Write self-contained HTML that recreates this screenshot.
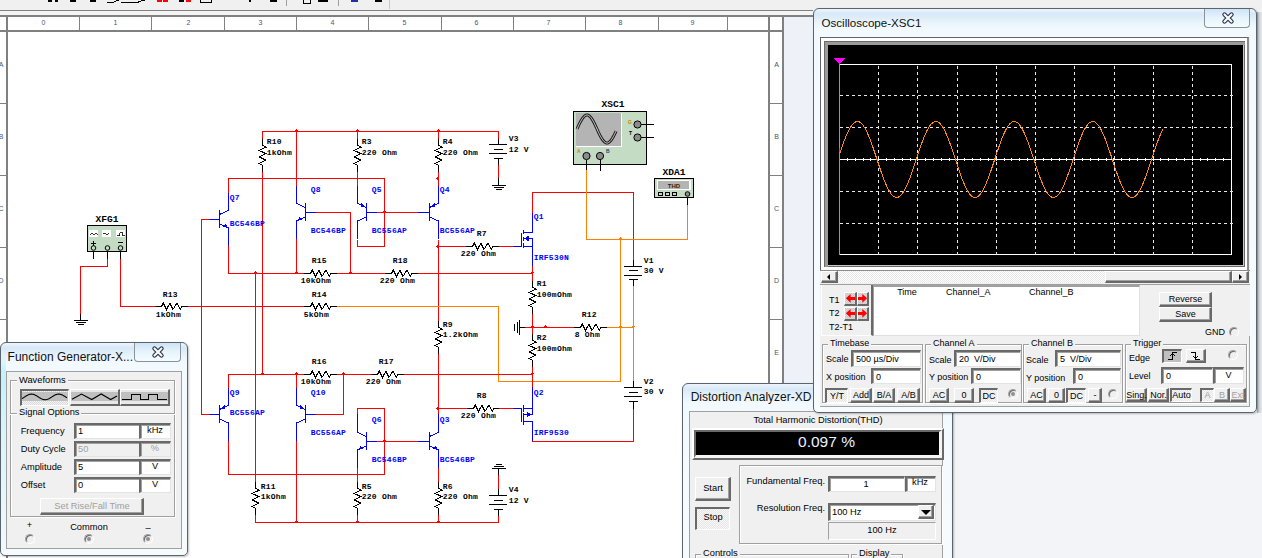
<!DOCTYPE html>
<html><head><meta charset="utf-8"><style>
*{margin:0;padding:0;box-sizing:border-box}
html,body{width:1262px;height:558px;overflow:hidden;background:#f2f4f8;font-family:"Liberation Sans",sans-serif}
.abs{position:absolute}
.t{white-space:nowrap;font-family:"Liberation Sans",sans-serif}
svg text.sl{font-family:"Liberation Mono",monospace;font-size:8px;font-weight:bold;letter-spacing:0.25px}
svg text.big{font-family:"Liberation Mono",monospace;font-size:9.6px;font-weight:bold}
svg text.tiny2{font-family:"Liberation Sans",sans-serif;font-size:6px;font-weight:bold;text-anchor:middle}
svg text.rl{font-family:"Liberation Sans",sans-serif;font-size:7px;text-anchor:middle}
svg text.tiny{font-family:"Liberation Sans",sans-serif;font-size:5px;font-weight:bold}
</style></head><body>
<div class="abs" style="left:0;top:0;width:1262px;height:10px;background:#f0f0f0"></div><div class="abs" style="left:0;top:10px;width:813px;height:7px;background:#f4f4f4;border-top:1px solid #808080;border-bottom:2px solid #808080"></div><div class="abs" style="left:0;top:17px;width:783px;height:541px;background:#fff"></div><div class="abs" style="left:784px;top:17px;width:30px;height:541px;background:#eef2f8"></div><svg class="abs" style="left:0;top:0" width="1262" height="558" shape-rendering="crispEdges"><rect x="6" y="16" width="2" height="542" fill="#808080"/><rect x="0" y="30" width="783" height="2" fill="#808080"/><rect x="79" y="16" width="1" height="14" fill="#808080"/><rect x="151" y="16" width="1" height="14" fill="#808080"/><rect x="224" y="16" width="1" height="14" fill="#808080"/><rect x="296" y="16" width="1" height="14" fill="#808080"/><rect x="368" y="16" width="1" height="14" fill="#808080"/><rect x="441" y="16" width="1" height="14" fill="#808080"/><rect x="513" y="16" width="1" height="14" fill="#808080"/><rect x="585" y="16" width="1" height="14" fill="#808080"/><rect x="658" y="16" width="1" height="14" fill="#808080"/><rect x="727" y="16" width="1" height="14" fill="#808080"/><rect x="768" y="16" width="2" height="542" fill="#808080"/><rect x="782" y="16" width="2" height="542" fill="#808080"/><rect x="0" y="103" width="6" height="1" fill="#808080"/><rect x="770" y="103" width="12" height="1" fill="#808080"/><rect x="0" y="175" width="6" height="1" fill="#808080"/><rect x="770" y="175" width="12" height="1" fill="#808080"/><rect x="0" y="247" width="6" height="1" fill="#808080"/><rect x="770" y="247" width="12" height="1" fill="#808080"/><rect x="0" y="319" width="6" height="1" fill="#808080"/><rect x="770" y="319" width="12" height="1" fill="#808080"/><rect x="0" y="391" width="6" height="1" fill="#808080"/><rect x="770" y="391" width="12" height="1" fill="#808080"/><rect x="0" y="463" width="6" height="1" fill="#808080"/><rect x="770" y="463" width="12" height="1" fill="#808080"/><rect x="0" y="535" width="6" height="1" fill="#808080"/><rect x="770" y="535" width="12" height="1" fill="#808080"/><text x="43.5" y="25" class="rl" fill="#4a5470">0</text><text x="115.5" y="25" class="rl" fill="#4a5470">1</text><text x="188.5" y="25" class="rl" fill="#4a5470">2</text><text x="260.5" y="25" class="rl" fill="#4a5470">3</text><text x="332.5" y="25" class="rl" fill="#4a5470">4</text><text x="404.5" y="25" class="rl" fill="#4a5470">5</text><text x="476.5" y="25" class="rl" fill="#4a5470">6</text><text x="548.5" y="25" class="rl" fill="#4a5470">7</text><text x="620.5" y="25" class="rl" fill="#4a5470">8</text><text x="692.5" y="25" class="rl" fill="#4a5470">9</text><text x="776.5" y="67" class="rl" fill="#4a5470">A</text><text x="1" y="67" class="rl" fill="#4a5470">A</text><text x="776.5" y="139" class="rl" fill="#4a5470">B</text><text x="1" y="139" class="rl" fill="#4a5470">B</text><text x="776.5" y="211" class="rl" fill="#4a5470">C</text><text x="1" y="211" class="rl" fill="#4a5470">C</text><text x="776.5" y="283" class="rl" fill="#4a5470">D</text><text x="1" y="283" class="rl" fill="#4a5470">D</text><text x="776.5" y="355" class="rl" fill="#4a5470">E</text><text x="1" y="355" class="rl" fill="#4a5470">E</text><text x="776.5" y="427" class="rl" fill="#4a5470">F</text><text x="1" y="427" class="rl" fill="#4a5470">F</text><text x="776.5" y="499" class="rl" fill="#4a5470">G</text><text x="1" y="499" class="rl" fill="#4a5470">G</text><rect x="262" y="131" width="237" height="1" fill="#ff0000"/><rect x="295" y="130" width="3" height="1" fill="#ff0000"/><rect x="296" y="129" width="1" height="1" fill="#ff0000"/><rect x="356" y="130" width="3" height="1" fill="#ff0000"/><rect x="357" y="129" width="1" height="1" fill="#ff0000"/><rect x="437" y="130" width="3" height="1" fill="#ff0000"/><rect x="438" y="129" width="1" height="1" fill="#ff0000"/><rect x="262" y="131" width="1" height="8" fill="#ff0000"/><rect x="262" y="139" width="1" height="7" fill="#000000"/><rect x="262" y="165" width="1" height="7" fill="#000000"/><polyline points="262.5,145 265.9,147.3 259.1,150.5 265.9,153.6 259.1,156.8 265.9,160.2 259.1,163.5 262.5,165.5" fill="none" stroke="#000000" stroke-width="1"/><rect x="262" y="172" width="1" height="203" fill="#ff0000"/><rect x="357" y="131" width="1" height="8" fill="#ff0000"/><rect x="357" y="139" width="1" height="7" fill="#000000"/><rect x="357" y="165" width="1" height="7" fill="#000000"/><polyline points="357.5,145 360.9,147.3 354.1,150.5 360.9,153.6 354.1,156.8 360.9,160.2 354.1,163.5 357.5,165.5" fill="none" stroke="#000000" stroke-width="1"/><rect x="357" y="172" width="1" height="14" fill="#ff0000"/><rect x="438" y="131" width="1" height="8" fill="#ff0000"/><rect x="438" y="139" width="1" height="7" fill="#000000"/><rect x="438" y="165" width="1" height="7" fill="#000000"/><polyline points="438.5,145 441.9,147.3 435.1,150.5 441.9,153.6 435.1,156.8 441.9,160.2 435.1,163.5 438.5,165.5" fill="none" stroke="#000000" stroke-width="1"/><rect x="438" y="172" width="1" height="14" fill="#ff0000"/><rect x="437" y="177" width="1" height="3" fill="#ff0000"/><rect x="436" y="178" width="1" height="1" fill="#ff0000"/><rect x="498" y="131" width="1" height="8" fill="#ff0000"/><rect x="498" y="139" width="1" height="6" fill="#000000"/><rect x="489" y="144" width="18" height="1" fill="#000000"/><rect x="494" y="149" width="9" height="1" fill="#000000"/><rect x="489" y="153" width="18" height="1" fill="#000000"/><rect x="494" y="158" width="9" height="1" fill="#000000"/><rect x="498" y="158" width="1" height="7" fill="#000000"/><rect x="498" y="165" width="1" height="13" fill="#ff0000"/><rect x="498" y="178" width="1" height="8" fill="#000000"/><rect x="492" y="185" width="14" height="1" fill="#000000"/><rect x="494" y="187" width="10" height="1" fill="#000000"/><rect x="496" y="189" width="6" height="1" fill="#000000"/><rect x="228" y="178" width="157" height="1" fill="#ff0000"/><rect x="228" y="178" width="1" height="15" fill="#ff0000"/><rect x="228" y="193" width="1" height="18" fill="#0000ff"/><rect x="219" y="210" width="1" height="18" fill="#0000ff"/><polyline points="219.5,214.5 228.5,210.5" fill="none" stroke="#0000ff" stroke-width="1"/><polyline points="219.5,224 228.5,228" fill="none" stroke="#0000ff" stroke-width="1"/><polygon points="227.5,227.5 223.0,227.0 225.5,223.5" fill="#0000ff"/><rect x="228" y="228" width="1" height="18" fill="#0000ff"/><rect x="228" y="246" width="1" height="28" fill="#ff0000"/><rect x="201" y="219" width="8" height="1" fill="#ff0000"/><rect x="209" y="219" width="11" height="1" fill="#0000ff"/><rect x="201" y="219" width="1" height="196" fill="#ff0000"/><rect x="296" y="131" width="1" height="55" fill="#ff0000"/><rect x="296" y="186" width="1" height="18" fill="#0000ff"/><rect x="305" y="203" width="1" height="18" fill="#0000ff"/><polyline points="305.5,207.5 296.5,203.5" fill="none" stroke="#0000ff" stroke-width="1"/><polyline points="305.5,217 296.5,221" fill="none" stroke="#0000ff" stroke-width="1"/><polygon points="297.5,220.5 302.0,220.0 299.5,216.5" fill="#0000ff"/><rect x="296" y="221" width="1" height="18" fill="#0000ff"/><rect x="296" y="239" width="1" height="35" fill="#ff0000"/><rect x="306" y="212" width="10" height="1" fill="#0000ff"/><rect x="316" y="212" width="35" height="1" fill="#ff0000"/><rect x="350" y="212" width="1" height="62" fill="#ff0000"/><rect x="357" y="186" width="1" height="18" fill="#0000ff"/><rect x="366" y="203" width="1" height="18" fill="#0000ff"/><polyline points="366.5,207.5 357.5,203.5" fill="none" stroke="#0000ff" stroke-width="1"/><polyline points="366.5,217 357.5,221" fill="none" stroke="#0000ff" stroke-width="1"/><polygon points="365.0,206.5 361.0,203.0 360.5,207.0" fill="#0000ff"/><rect x="357" y="221" width="1" height="18" fill="#0000ff"/><rect x="357" y="240" width="1" height="7" fill="#ff0000"/><rect x="366" y="212" width="11" height="1" fill="#0000ff"/><rect x="377" y="212" width="41" height="1" fill="#ff0000"/><rect x="418" y="212" width="12" height="1" fill="#0000ff"/><rect x="383" y="211" width="3" height="1" fill="#ff0000"/><rect x="384" y="210" width="1" height="1" fill="#ff0000"/><rect x="384" y="178" width="1" height="69" fill="#ff0000"/><rect x="357" y="246" width="28" height="1" fill="#ff0000"/><rect x="438" y="186" width="1" height="18" fill="#0000ff"/><rect x="429" y="203" width="1" height="18" fill="#0000ff"/><polyline points="429.5,207.5 438.5,203.5" fill="none" stroke="#0000ff" stroke-width="1"/><polyline points="429.5,217 438.5,221" fill="none" stroke="#0000ff" stroke-width="1"/><polygon points="431.0,206.5 435.0,203.0 435.5,207.0" fill="#0000ff"/><rect x="438" y="221" width="1" height="18" fill="#0000ff"/><rect x="438" y="240" width="1" height="81" fill="#ff0000"/><rect x="438" y="246" width="28" height="1" fill="#ff0000"/><rect x="466" y="246" width="7" height="1" fill="#000000"/><rect x="492" y="246" width="7" height="1" fill="#000000"/><polyline points="472.5,246.5 474.2,243.0 477.5,249.5 480.9,243.0 483.9,249.5 488,243.0 491.2,249.5 492.5,246.5" fill="none" stroke="#000000" stroke-width="1"/><rect x="499" y="246" width="14" height="1" fill="#ff0000"/><rect x="513" y="246" width="9" height="1" fill="#0000ff"/><rect x="437" y="245" width="1" height="3" fill="#ff0000"/><rect x="436" y="246" width="1" height="1" fill="#ff0000"/><rect x="532" y="192" width="1" height="21" fill="#ff0000"/><rect x="532" y="213" width="1" height="20" fill="#0000ff"/><rect x="523" y="232" width="10" height="1" fill="#0000ff"/><rect x="523" y="238" width="10" height="1" fill="#0000ff"/><rect x="523" y="246" width="10" height="1" fill="#0000ff"/><rect x="521" y="233" width="1" height="14" fill="#0000ff"/><rect x="523" y="230" width="1" height="4" fill="#0000ff"/><rect x="523" y="237" width="1" height="4" fill="#0000ff"/><rect x="523" y="243" width="1" height="5" fill="#0000ff"/><polygon points="524,238.5 528.5,235.5 528.5,241.5" fill="#0000ff"/><rect x="532" y="238" width="1" height="28" fill="#0000ff"/><rect x="532" y="266" width="1" height="8" fill="#ff0000"/><rect x="531" y="272" width="3" height="1" fill="#ff0000"/><rect x="532" y="271" width="1" height="1" fill="#ff0000"/><rect x="532" y="192" width="102" height="1" fill="#ff0000"/><rect x="633" y="192" width="1" height="68" fill="#ff0000"/><rect x="633" y="260" width="1" height="7" fill="#000000"/><rect x="624" y="266" width="18" height="1" fill="#000000"/><rect x="629" y="270" width="9" height="1" fill="#000000"/><rect x="624" y="275" width="18" height="1" fill="#000000"/><rect x="629" y="279" width="9" height="1" fill="#000000"/><rect x="633" y="280" width="1" height="6" fill="#000000"/><rect x="633" y="286" width="1" height="95" fill="#ff8000"/><rect x="633" y="381" width="1" height="7" fill="#000000"/><rect x="624" y="387" width="18" height="1" fill="#000000"/><rect x="629" y="392" width="9" height="1" fill="#000000"/><rect x="624" y="396" width="18" height="1" fill="#000000"/><rect x="629" y="401" width="9" height="1" fill="#000000"/><rect x="633" y="402" width="1" height="7" fill="#000000"/><rect x="633" y="409" width="1" height="33" fill="#ff0000"/><rect x="532" y="441" width="102" height="1" fill="#ff0000"/><rect x="228" y="273" width="76" height="1" fill="#ff0000"/><rect x="304" y="273" width="7" height="1" fill="#000000"/><rect x="330" y="273" width="7" height="1" fill="#000000"/><polyline points="310.5,273.5 312.2,270.0 315.5,276.5 318.9,270.0 321.9,276.5 326,270.0 329.2,276.5 330.5,273.5" fill="none" stroke="#000000" stroke-width="1"/><rect x="337" y="273" width="48" height="1" fill="#ff0000"/><rect x="385" y="273" width="7" height="1" fill="#000000"/><rect x="411" y="273" width="7" height="1" fill="#000000"/><polyline points="391.5,273.5 393.2,270.0 396.5,276.5 399.9,270.0 402.9,276.5 407,270.0 410.2,276.5 411.5,273.5" fill="none" stroke="#000000" stroke-width="1"/><rect x="418" y="273" width="115" height="1" fill="#ff0000"/><rect x="254" y="272" width="3" height="1" fill="#ff0000"/><rect x="255" y="271" width="1" height="1" fill="#ff0000"/><rect x="295" y="272" width="3" height="1" fill="#ff0000"/><rect x="296" y="271" width="1" height="1" fill="#ff0000"/><rect x="349" y="272" width="3" height="1" fill="#ff0000"/><rect x="350" y="271" width="1" height="1" fill="#ff0000"/><rect x="255" y="273" width="1" height="209" fill="#ff0000"/><rect x="255" y="482" width="1" height="7" fill="#000000"/><rect x="255" y="508" width="1" height="7" fill="#000000"/><polyline points="255.5,488 258.9,490.3 252.1,493.5 258.9,496.6 252.1,499.8 258.9,503.2 252.1,506.5 255.5,508.5" fill="none" stroke="#000000" stroke-width="1"/><rect x="255" y="515" width="1" height="8" fill="#ff0000"/><rect x="107" y="258" width="1" height="9" fill="#ff0000"/><rect x="80" y="266" width="28" height="1" fill="#ff0000"/><rect x="80" y="266" width="1" height="48" fill="#ff0000"/><rect x="80" y="314" width="1" height="7" fill="#000000"/><rect x="74" y="320" width="14" height="1" fill="#000000"/><rect x="76" y="322" width="10" height="1" fill="#000000"/><rect x="78" y="324" width="6" height="1" fill="#000000"/><rect x="120" y="258" width="1" height="49" fill="#ff0000"/><rect x="120" y="306" width="35" height="1" fill="#ff0000"/><rect x="155" y="306" width="7" height="1" fill="#000000"/><rect x="181" y="306" width="7" height="1" fill="#000000"/><polyline points="161.5,306.5 163.2,303.0 166.5,309.5 169.9,303.0 172.9,309.5 177,303.0 180.2,309.5 181.5,306.5" fill="none" stroke="#000000" stroke-width="1"/><rect x="188" y="306" width="116" height="1" fill="#ff0000"/><rect x="304" y="306" width="7" height="1" fill="#000000"/><rect x="330" y="306" width="7" height="1" fill="#000000"/><polyline points="310.5,306.5 312.2,303.0 315.5,309.5 318.9,303.0 321.9,309.5 326,303.0 329.2,309.5 330.5,306.5" fill="none" stroke="#000000" stroke-width="1"/><rect x="337" y="306" width="162" height="1" fill="#ff8000"/><rect x="498" y="306" width="1" height="76" fill="#ff8000"/><rect x="498" y="381" width="123" height="1" fill="#ff8000"/><rect x="620" y="239" width="1" height="143" fill="#ff8000"/><rect x="586" y="239" width="102" height="1" fill="#ff8000"/><rect x="619" y="238" width="3" height="1" fill="#ff8000"/><rect x="620" y="237" width="1" height="1" fill="#ff8000"/><rect x="619" y="326" width="3" height="1" fill="#ff8000"/><rect x="620" y="325" width="1" height="1" fill="#ff8000"/><rect x="632" y="326" width="3" height="1" fill="#ff8000"/><rect x="633" y="325" width="1" height="1" fill="#ff8000"/><rect x="586" y="170" width="1" height="70" fill="#ff8000"/><rect x="687" y="197" width="1" height="8" fill="#000000"/><rect x="687" y="205" width="1" height="35" fill="#ff8000"/><rect x="438" y="321" width="1" height="7" fill="#000000"/><rect x="438" y="347" width="1" height="7" fill="#000000"/><polyline points="438.5,327 441.9,329.3 435.1,332.5 441.9,335.6 435.1,338.8 441.9,342.2 435.1,345.5 438.5,347.5" fill="none" stroke="#000000" stroke-width="1"/><rect x="438" y="354" width="1" height="60" fill="#ff0000"/><rect x="437" y="407" width="1" height="3" fill="#ff0000"/><rect x="436" y="408" width="1" height="1" fill="#ff0000"/><rect x="532" y="273" width="1" height="8" fill="#ff0000"/><rect x="532" y="281" width="1" height="7" fill="#000000"/><rect x="532" y="307" width="1" height="7" fill="#000000"/><polyline points="532.5,287 535.9,289.3 529.1,292.5 535.9,295.6 529.1,298.8 535.9,302.2 529.1,305.5 532.5,307.5" fill="none" stroke="#000000" stroke-width="1"/><rect x="532" y="314" width="1" height="20" fill="#ff0000"/><rect x="532" y="334" width="1" height="7" fill="#000000"/><rect x="532" y="360" width="1" height="7" fill="#000000"/><polyline points="532.5,340 535.9,342.3 529.1,345.5 535.9,348.6 529.1,351.8 535.9,355.2 529.1,358.5 532.5,360.5" fill="none" stroke="#000000" stroke-width="1"/><rect x="532" y="367" width="1" height="20" fill="#ff0000"/><rect x="519" y="320" width="1" height="15" fill="#000000"/><rect x="517" y="322" width="1" height="11" fill="#000000"/><rect x="514" y="324" width="1" height="7" fill="#000000"/><rect x="520" y="327" width="5" height="1" fill="#000000"/><rect x="525" y="327" width="49" height="1" fill="#ff0000"/><rect x="574" y="327" width="7" height="1" fill="#000000"/><rect x="600" y="327" width="7" height="1" fill="#000000"/><polyline points="580.5,327.5 582.2,324.0 585.5,330.5 588.9,324.0 591.9,330.5 596,324.0 599.2,330.5 600.5,327.5" fill="none" stroke="#000000" stroke-width="1"/><rect x="607" y="327" width="27" height="1" fill="#ff8000"/><rect x="531" y="326" width="3" height="1" fill="#ff0000"/><rect x="532" y="325" width="1" height="1" fill="#ff0000"/><rect x="544" y="326" width="3" height="1" fill="#ff0000"/><rect x="545" y="325" width="1" height="1" fill="#ff0000"/><rect x="228" y="374" width="76" height="1" fill="#ff0000"/><rect x="304" y="374" width="7" height="1" fill="#000000"/><rect x="330" y="374" width="7" height="1" fill="#000000"/><polyline points="310.5,374.5 312.2,371.0 315.5,377.5 318.9,371.0 321.9,377.5 326,371.0 329.2,377.5 330.5,374.5" fill="none" stroke="#000000" stroke-width="1"/><rect x="337" y="374" width="34" height="1" fill="#ff0000"/><rect x="371" y="374" width="7" height="1" fill="#000000"/><rect x="397" y="374" width="7" height="1" fill="#000000"/><polyline points="377.5,374.5 379.2,371.0 382.5,377.5 385.9,371.0 388.9,377.5 393,371.0 396.2,377.5 397.5,374.5" fill="none" stroke="#000000" stroke-width="1"/><rect x="404" y="374" width="129" height="1" fill="#ff0000"/><rect x="261" y="373" width="3" height="1" fill="#ff0000"/><rect x="262" y="372" width="1" height="1" fill="#ff0000"/><rect x="295" y="373" width="3" height="1" fill="#ff0000"/><rect x="296" y="372" width="1" height="1" fill="#ff0000"/><rect x="342" y="373" width="3" height="1" fill="#ff0000"/><rect x="343" y="372" width="1" height="1" fill="#ff0000"/><rect x="531" y="373" width="3" height="1" fill="#ff0000"/><rect x="532" y="372" width="1" height="1" fill="#ff0000"/><rect x="343" y="374" width="1" height="41" fill="#ff0000"/><rect x="316" y="414" width="28" height="1" fill="#ff0000"/><rect x="306" y="414" width="10" height="1" fill="#0000ff"/><rect x="228" y="374" width="1" height="14" fill="#ff0000"/><rect x="228" y="388" width="1" height="18" fill="#0000ff"/><rect x="219" y="405" width="1" height="18" fill="#0000ff"/><polyline points="219.5,409.5 228.5,405.5" fill="none" stroke="#0000ff" stroke-width="1"/><polyline points="219.5,419 228.5,423" fill="none" stroke="#0000ff" stroke-width="1"/><polygon points="221.0,408.5 225.0,405.0 225.5,409.0" fill="#0000ff"/><rect x="228" y="423" width="1" height="18" fill="#0000ff"/><rect x="228" y="441" width="1" height="34" fill="#ff0000"/><rect x="201" y="414" width="8" height="1" fill="#ff0000"/><rect x="209" y="414" width="11" height="1" fill="#0000ff"/><rect x="296" y="374" width="1" height="14" fill="#ff0000"/><rect x="296" y="388" width="1" height="18" fill="#0000ff"/><rect x="305" y="405" width="1" height="18" fill="#0000ff"/><polyline points="305.5,409.5 296.5,405.5" fill="none" stroke="#0000ff" stroke-width="1"/><polyline points="305.5,419 296.5,423" fill="none" stroke="#0000ff" stroke-width="1"/><polygon points="304.0,408.5 300.0,405.0 299.5,409.0" fill="#0000ff"/><rect x="296" y="423" width="1" height="18" fill="#0000ff"/><rect x="296" y="441" width="1" height="82" fill="#ff0000"/><rect x="228" y="474" width="157" height="1" fill="#ff0000"/><rect x="357" y="408" width="28" height="1" fill="#ff0000"/><rect x="357" y="408" width="1" height="6" fill="#ff0000"/><rect x="357" y="414" width="1" height="19" fill="#0000ff"/><rect x="366" y="432" width="1" height="18" fill="#0000ff"/><polyline points="366.5,436.5 357.5,432.5" fill="none" stroke="#0000ff" stroke-width="1"/><polyline points="366.5,446 357.5,450" fill="none" stroke="#0000ff" stroke-width="1"/><polygon points="358.5,449.5 363.0,449.0 360.5,445.5" fill="#0000ff"/><rect x="357" y="450" width="1" height="18" fill="#0000ff"/><rect x="357" y="468" width="1" height="14" fill="#ff0000"/><rect x="357" y="482" width="1" height="7" fill="#000000"/><rect x="357" y="508" width="1" height="7" fill="#000000"/><polyline points="357.5,488 360.9,490.3 354.1,493.5 360.9,496.6 354.1,499.8 360.9,503.2 354.1,506.5 357.5,508.5" fill="none" stroke="#000000" stroke-width="1"/><rect x="357" y="515" width="1" height="8" fill="#ff0000"/><rect x="384" y="408" width="1" height="67" fill="#ff0000"/><rect x="383" y="440" width="3" height="1" fill="#ff0000"/><rect x="384" y="439" width="1" height="1" fill="#ff0000"/><rect x="366" y="441" width="11" height="1" fill="#0000ff"/><rect x="377" y="441" width="41" height="1" fill="#ff0000"/><rect x="418" y="441" width="12" height="1" fill="#0000ff"/><rect x="438" y="414" width="1" height="19" fill="#0000ff"/><rect x="429" y="432" width="1" height="18" fill="#0000ff"/><polyline points="429.5,436.5 438.5,432.5" fill="none" stroke="#0000ff" stroke-width="1"/><polyline points="429.5,446 438.5,450" fill="none" stroke="#0000ff" stroke-width="1"/><polygon points="437.5,449.5 433.0,449.0 435.5,445.5" fill="#0000ff"/><rect x="438" y="450" width="1" height="18" fill="#0000ff"/><rect x="438" y="468" width="1" height="14" fill="#ff0000"/><rect x="438" y="482" width="1" height="7" fill="#000000"/><rect x="438" y="508" width="1" height="7" fill="#000000"/><polyline points="438.5,488 441.9,490.3 435.1,493.5 441.9,496.6 435.1,499.8 441.9,503.2 435.1,506.5 438.5,508.5" fill="none" stroke="#000000" stroke-width="1"/><rect x="438" y="515" width="1" height="8" fill="#ff0000"/><rect x="438" y="408" width="29" height="1" fill="#ff0000"/><rect x="467" y="408" width="7" height="1" fill="#000000"/><rect x="493" y="408" width="7" height="1" fill="#000000"/><polyline points="473.5,408.5 475.2,405.0 478.5,411.5 481.9,405.0 484.9,411.5 489,405.0 492.2,411.5 493.5,408.5" fill="none" stroke="#000000" stroke-width="1"/><rect x="499" y="408" width="14" height="1" fill="#ff0000"/><rect x="513" y="408" width="9" height="1" fill="#0000ff"/><rect x="532" y="387" width="1" height="28" fill="#0000ff"/><rect x="523" y="408" width="10" height="1" fill="#0000ff"/><rect x="523" y="414" width="10" height="1" fill="#0000ff"/><rect x="523" y="421" width="10" height="1" fill="#0000ff"/><rect x="532" y="421" width="1" height="20" fill="#0000ff"/><rect x="521" y="408" width="1" height="14" fill="#0000ff"/><rect x="523" y="405" width="1" height="7" fill="#0000ff"/><rect x="523" y="413" width="1" height="6" fill="#0000ff"/><rect x="523" y="419" width="1" height="6" fill="#0000ff"/><polygon points="531,414.5 526.5,411.5 526.5,417.5" fill="#0000ff"/><rect x="255" y="522" width="244" height="1" fill="#ff0000"/><rect x="295" y="521" width="3" height="1" fill="#ff0000"/><rect x="296" y="520" width="1" height="1" fill="#ff0000"/><rect x="356" y="521" width="3" height="1" fill="#ff0000"/><rect x="357" y="520" width="1" height="1" fill="#ff0000"/><rect x="437" y="521" width="3" height="1" fill="#ff0000"/><rect x="438" y="520" width="1" height="1" fill="#ff0000"/><rect x="498" y="516" width="1" height="6" fill="#ff0000"/><rect x="498" y="509" width="1" height="7" fill="#000000"/><rect x="489" y="495" width="18" height="1" fill="#000000"/><rect x="494" y="500" width="9" height="1" fill="#000000"/><rect x="489" y="504" width="18" height="1" fill="#000000"/><rect x="494" y="509" width="9" height="1" fill="#000000"/><rect x="498" y="489" width="1" height="6" fill="#000000"/><rect x="496" y="464" width="6" height="1" fill="#000000"/><rect x="494" y="466" width="10" height="1" fill="#000000"/><rect x="492" y="468" width="14" height="1" fill="#000000"/><rect x="498" y="469" width="1" height="6" fill="#000000"/><rect x="498" y="475" width="1" height="14" fill="#ff0000"/><text x="266.7" y="143.5" class="sl" fill="#000000">R10</text><text x="266.7" y="154.5" class="sl" fill="#000000">1kOhm</text><text x="361.7" y="143.5" class="sl" fill="#000000">R3</text><text x="361.7" y="154.5" class="sl" fill="#000000">220 Ohm</text><text x="442.7" y="143.5" class="sl" fill="#000000">R4</text><text x="442.7" y="154.5" class="sl" fill="#000000">220 Ohm</text><text x="508.7" y="140.5" class="sl" fill="#000000">V3</text><text x="508.7" y="151.5" class="sl" fill="#000000">12 V</text><text x="162.7" y="296.5" class="sl" fill="#000000">R13</text><text x="155.7" y="316.5" class="sl" fill="#000000">1kOhm</text><text x="311.7" y="262.5" class="sl" fill="#000000">R15</text><text x="300.7" y="282.5" class="sl" fill="#000000">10kOhm</text><text x="311.7" y="296.5" class="sl" fill="#000000">R14</text><text x="303.7" y="316.5" class="sl" fill="#000000">5kOhm</text><text x="392.7" y="262.5" class="sl" fill="#000000">R18</text><text x="379.7" y="282.5" class="sl" fill="#000000">220 Ohm</text><text x="476.7" y="235.5" class="sl" fill="#000000">R7</text><text x="460.7" y="255.5" class="sl" fill="#000000">220 Ohm</text><text x="536.7" y="285.5" class="sl" fill="#000000">R1</text><text x="536.7" y="296.5" class="sl" fill="#000000">100mOhm</text><text x="442.7" y="326.5" class="sl" fill="#000000">R9</text><text x="442.7" y="336.5" class="sl" fill="#000000">1.2kOhm</text><text x="581.7" y="316.5" class="sl" fill="#000000">R12</text><text x="574.7" y="336.5" class="sl" fill="#000000">8 Ohm</text><text x="536.7" y="339.5" class="sl" fill="#000000">R2</text><text x="536.7" y="350.5" class="sl" fill="#000000">100mOhm</text><text x="643.7" y="262.5" class="sl" fill="#000000">V1</text><text x="643.7" y="272.5" class="sl" fill="#000000">30 V</text><text x="311.7" y="363.5" class="sl" fill="#000000">R16</text><text x="300.7" y="383.5" class="sl" fill="#000000">10kOhm</text><text x="378.7" y="363.5" class="sl" fill="#000000">R17</text><text x="365.7" y="383.5" class="sl" fill="#000000">220 Ohm</text><text x="476.7" y="397.5" class="sl" fill="#000000">R8</text><text x="460.7" y="417.5" class="sl" fill="#000000">220 Ohm</text><text x="643.7" y="383.5" class="sl" fill="#000000">V2</text><text x="643.7" y="393.5" class="sl" fill="#000000">30 V</text><text x="260.7" y="488.5" class="sl" fill="#000000">R11</text><text x="260.7" y="498.5" class="sl" fill="#000000">1kOhm</text><text x="361.7" y="488.5" class="sl" fill="#000000">R5</text><text x="361.7" y="498.5" class="sl" fill="#000000">220 Ohm</text><text x="442.7" y="488.5" class="sl" fill="#000000">R6</text><text x="442.7" y="498.5" class="sl" fill="#000000">220 Ohm</text><text x="508.7" y="491.5" class="sl" fill="#000000">V4</text><text x="508.7" y="502.5" class="sl" fill="#000000">12 V</text><text x="95.5" y="222" class="big" fill="#000000">XFG1</text><text x="601.5" y="107" class="big" fill="#000000">XSC1</text><text x="662.5" y="175" class="big" fill="#000000">XDA1</text><text x="229.7" y="199.5" class="sl" fill="#0000ff">Q7</text><text x="229.7" y="225.5" class="sl" fill="#0000ff">BC546BP</text><text x="310.7" y="192.0" class="sl" fill="#0000ff">Q8</text><text x="310.7" y="232.5" class="sl" fill="#0000ff">BC546BP</text><text x="371.7" y="192.0" class="sl" fill="#0000ff">Q5</text><text x="371.7" y="232.5" class="sl" fill="#0000ff">BC556AP</text><text x="439.7" y="192.0" class="sl" fill="#0000ff">Q4</text><text x="439.7" y="232.5" class="sl" fill="#0000ff">BC556AP</text><text x="533.7" y="219.0" class="sl" fill="#0000ff">Q1</text><text x="533.7" y="259.5" class="sl" fill="#0000ff">IRF530N</text><text x="229.7" y="394.5" class="sl" fill="#0000ff">Q9</text><text x="229.7" y="414.5" class="sl" fill="#0000ff">BC556AP</text><text x="310.7" y="394.5" class="sl" fill="#0000ff">Q10</text><text x="310.7" y="434.5" class="sl" fill="#0000ff">BC556AP</text><text x="371.7" y="421.5" class="sl" fill="#0000ff">Q6</text><text x="371.7" y="461.5" class="sl" fill="#0000ff">BC546BP</text><text x="439.7" y="421.5" class="sl" fill="#0000ff">Q3</text><text x="439.7" y="461.5" class="sl" fill="#0000ff">BC546BP</text><text x="533.7" y="394.5" class="sl" fill="#0000ff">Q2</text><text x="533.7" y="434.5" class="sl" fill="#0000ff">IRF9530</text><rect x="573" y="111" width="74" height="54" fill="#000000"/><rect x="574" y="112" width="72" height="52" fill="#c4dcc4"/><rect x="576" y="113" width="46" height="34" fill="#fff"/><rect x="576" y="113" width="45" height="33" fill="#b4b4b4"/><g shape-rendering="auto"><polyline points="577.0,129.0 577.5,127.9 578.0,126.8 578.5,125.7 579.0,124.7 579.5,123.6 580.0,122.6 580.5,121.7 581.0,120.8 581.5,119.9 582.0,119.1 582.5,118.4 583.0,117.7 583.5,117.1 584.0,116.5 584.5,116.1 585.0,115.7 585.5,115.4 586.0,115.2 586.5,115.0 587.0,115.0 587.5,115.0 588.0,115.2 588.5,115.4 589.0,115.7 589.5,116.1 590.0,116.5 590.5,117.1 591.0,117.7 591.5,118.4 592.0,119.1 592.5,119.9 593.0,120.8 593.5,121.7 594.0,122.6 594.5,123.6 595.0,124.7 595.5,125.7 596.0,126.8 596.5,127.9 597.0,129.0 597.5,130.1 598.0,131.2 598.5,132.3 599.0,133.3 599.5,134.4 600.0,135.4 600.5,136.3 601.0,137.2 601.5,138.1 602.0,138.9 602.5,139.6 603.0,140.3 603.5,140.9 604.0,141.5 604.5,141.9 605.0,142.3 605.5,142.6 606.0,142.8 606.5,143.0 607.0,143.0 607.5,143.0 608.0,142.8 608.5,142.6 609.0,142.3 609.5,141.9 610.0,141.5 610.5,140.9 611.0,140.3 611.5,139.6 612.0,138.9 612.5,138.1 613.0,137.2 613.5,136.3 614.0,135.4 614.5,134.4 615.0,133.3 615.5,132.3 616.0,131.2" fill="none" stroke="#202020" stroke-width="3"/><polyline points="577.0,129.0 577.5,127.9 578.0,126.8 578.5,125.7 579.0,124.7 579.5,123.6 580.0,122.6 580.5,121.7 581.0,120.8 581.5,119.9 582.0,119.1 582.5,118.4 583.0,117.7 583.5,117.1 584.0,116.5 584.5,116.1 585.0,115.7 585.5,115.4 586.0,115.2 586.5,115.0 587.0,115.0 587.5,115.0 588.0,115.2 588.5,115.4 589.0,115.7 589.5,116.1 590.0,116.5 590.5,117.1 591.0,117.7 591.5,118.4 592.0,119.1 592.5,119.9 593.0,120.8 593.5,121.7 594.0,122.6 594.5,123.6 595.0,124.7 595.5,125.7 596.0,126.8 596.5,127.9 597.0,129.0 597.5,130.1 598.0,131.2 598.5,132.3 599.0,133.3 599.5,134.4 600.0,135.4 600.5,136.3 601.0,137.2 601.5,138.1 602.0,138.9 602.5,139.6 603.0,140.3 603.5,140.9 604.0,141.5 604.5,141.9 605.0,142.3 605.5,142.6 606.0,142.8 606.5,143.0 607.0,143.0 607.5,143.0 608.0,142.8 608.5,142.6 609.0,142.3 609.5,141.9 610.0,141.5 610.5,140.9 611.0,140.3 611.5,139.6 612.0,138.9 612.5,138.1 613.0,137.2 613.5,136.3 614.0,135.4 614.5,134.4 615.0,133.3 615.5,132.3 616.0,131.2" fill="none" stroke="#e8e8e8" stroke-width="0.9"/></g><circle shape-rendering="auto" cx="637.5" cy="124.5" r="3.6" fill="#8c8c8c" stroke="#000" stroke-width="1"/><circle shape-rendering="auto" cx="637.5" cy="137.5" r="3.6" fill="#8c8c8c" stroke="#000" stroke-width="1"/><rect x="641" y="124" width="13" height="1" fill="#000000"/><rect x="641" y="137" width="13" height="1" fill="#000000"/><circle shape-rendering="auto" cx="586.5" cy="156" r="3.6" fill="#8c8c8c" stroke="#000" stroke-width="1"/><circle shape-rendering="auto" cx="600" cy="156" r="3.6" fill="#8c8c8c" stroke="#000" stroke-width="1"/><rect x="586" y="160" width="1" height="10" fill="#000000"/><rect x="600" y="160" width="1" height="11" fill="#000000"/><text x="628" y="124" class="tiny" fill="#d08000">G</text><text x="629" y="135" class="tiny" fill="#000">T</text><text x="577" y="153" class="tiny" fill="#d08000">A</text><text x="606" y="153" class="tiny" fill="#304080">B</text><rect x="654" y="178" width="40" height="20" fill="#000000"/><rect x="655" y="179" width="38" height="18" fill="#c4dcc4"/><rect x="657" y="180" width="34" height="10" fill="#fff"/><rect x="658" y="181" width="31" height="8" fill="#b4b4b4"/><text x="674" y="188" class="tiny2" fill="#402000">THD</text><rect x="658" y="192" width="5" height="4" fill="#000000"/><rect x="659" y="193" width="3" height="2" fill="#d0d0d0"/><rect x="665" y="192" width="5" height="4" fill="#000000"/><rect x="666" y="193" width="3" height="2" fill="#d0d0d0"/><rect x="672" y="192" width="5" height="4" fill="#000000"/><rect x="673" y="193" width="3" height="2" fill="#d0d0d0"/><circle shape-rendering="auto" cx="687.5" cy="194" r="2.3" fill="#909090" stroke="#000" stroke-width="1"/><rect x="87" y="225" width="40" height="27" fill="#000000"/><rect x="88" y="226" width="38" height="25" fill="#c4dcc4"/><rect x="89" y="230" width="9" height="7" fill="#fff"/><rect x="102" y="230" width="9" height="7" fill="#fff"/><rect x="116" y="230" width="9" height="7" fill="#fff"/><polyline points="90,235 92,233 94,235 96,233 98,235" fill="none" stroke="#000" stroke-width="0.8"/><polyline points="103,233 105,233 107,235 109,233" fill="none" stroke="#000" stroke-width="0.8"/><polyline points="117,235.5 119.5,235.5 119.5,232.5 122.5,232.5 122.5,235.5 124.5,235.5" fill="none" stroke="#000" stroke-width="0.8"/><circle shape-rendering="auto" cx="93.5" cy="248" r="2.3" fill="#c4dcc4" stroke="#000" stroke-width="1"/><rect x="93" y="251" width="1" height="8" fill="#000000"/><circle shape-rendering="auto" cx="107.5" cy="248" r="2.3" fill="#c4dcc4" stroke="#000" stroke-width="1"/><rect x="107" y="251" width="1" height="8" fill="#000000"/><circle shape-rendering="auto" cx="120.5" cy="248" r="2.3" fill="#c4dcc4" stroke="#000" stroke-width="1"/><rect x="120" y="251" width="1" height="8" fill="#000000"/><rect x="91" y="243" width="5" height="1" fill="#000000"/><rect x="93" y="241" width="1" height="5" fill="#000000"/><rect x="118" y="242" width="5" height="1" fill="#000000"/><rect x="48" y="0" width="4" height="2" fill="#000000"/><rect x="55" y="0" width="3" height="2" fill="#000000"/><rect x="70" y="0" width="6" height="2" fill="#000000"/><rect x="90" y="0" width="6" height="2" fill="#000000"/><rect x="157" y="0" width="5" height="2" fill="#ff0000"/><rect x="163" y="0" width="5" height="2" fill="#ff0000"/><rect x="179" y="0" width="5" height="2" fill="#000000"/><rect x="186" y="0" width="5" height="2" fill="#ff0000"/><rect x="249" y="0" width="2" height="2" fill="#000000"/><rect x="270" y="0" width="7" height="2" fill="#000000"/><rect x="318" y="0" width="10" height="2" fill="#000000"/><rect x="351" y="0" width="7" height="2" fill="#2030a0"/><rect x="375" y="0" width="7" height="2" fill="#000000"/><polyline points="107,2.5 113,2.5 116,1 119,0" fill="none" stroke="#000000" stroke-width="1.2"/><polyline points="121,2.5 137,2.5 141,1 145,0" fill="none" stroke="#000000" stroke-width="1.2"/><rect x="200" y="2" width="12" height="1" fill="#000000"/><rect x="200" y="0" width="1" height="2" fill="#000000"/><rect x="211" y="0" width="1" height="2" fill="#000000"/><rect x="303" y="0" width="1" height="4" fill="#000000"/><rect x="310" y="0" width="1" height="4" fill="#000000"/><rect x="303" y="3" width="8" height="1" fill="#000000"/><rect x="286" y="0" width="1" height="6" fill="#a0a0a0"/><rect x="338" y="0" width="1" height="6" fill="#a0a0a0"/><rect x="389" y="0" width="1" height="9" fill="#c8c8c8"/></svg><div class="abs" style="left:0px;top:342px;width:188px;height:214px;border:1px solid #5b636c;border-radius:6px 6px 5px 5px;background:linear-gradient(180deg,#eef5fb 0,#d6e8f7 5px,#e4f1fa 11px,#f3faff 20px,#f6fbfe 100%);box-shadow:1px 1px 2px rgba(0,0,0,0.25)"></div><div class="abs" style="left:1px;top:352px;width:5px;height:200px;background:linear-gradient(180deg,rgba(190,240,250,0) 0,rgba(190,240,250,0.9) 20px,rgba(200,240,248,0.6) 80px,rgba(220,240,250,0.2) 200px)"></div><div class="abs t" style="left:7.6px;top:351.22px;font-size:12px;line-height:12px;color:#111;">Function Generator-X...</div><div class="abs" style="left:134px;top:343px;width:47px;height:19px;border:1px solid #8a929c;border-top:none;border-radius:0 0 4px 4px;background:linear-gradient(#cfe3f7,#e6f4fc 50%,#f4fcff)"></div><svg class="abs" style="left:150px;top:344px" width="16" height="16"><g stroke-linecap="round"><path d="M4.5,4.5 L11.5,11.5 M11.5,4.5 L4.5,11.5" stroke="#283048" stroke-width="4.4"/><path d="M4.5,4.5 L11.5,11.5 M11.5,4.5 L4.5,11.5" stroke="#fbfbfb" stroke-width="2.2"/></g></svg><div class="abs" style="left:6px;top:371px;width:176px;height:178px;background:#f0f0f0;border:1px solid #a0a0a0"></div><div class="abs" style="left:10px;top:380px;width:165px;height:137px;border:1px solid #a0a0a0;box-shadow:1px 1px 0 #fff, inset 1px 1px 0 #fff"></div><div class="abs t" style="left:17px;top:375.5px;font-size:9.3px;line-height:9.3px;background:#f0f0f0;padding:0 2px">Waveforms</div><div class="abs" style="left:10px;top:413px;width:165px;height:1px;background:#a0a0a0;box-shadow:0 1px 0 #fff"></div><div class="abs t" style="left:17px;top:408px;font-size:9.3px;line-height:9.3px;background:#f0f0f0;padding:0 2px">Signal Options</div><div class="abs" style="left:20px;top:389px;width:49px;height:17px;background-color:#f4f4f4;background-image:linear-gradient(45deg,#dadada 25%,transparent 25%,transparent 75%,#dadada 75%),linear-gradient(45deg,#dadada 25%,transparent 25%,transparent 75%,#dadada 75%);background-size:2px 2px;background-position:0 0,1px 1px;border-top:2px solid #696969;border-left:2px solid #696969;border-right:1px solid #fff;border-bottom:1px solid #fff"></div><div class="abs" style="left:22px;top:392px;width:46px;height:9px;background:#c0c0c0"></div><div class="abs" style="left:70px;top:389px;width:50px;height:17px;background:#e8e8e8;border-top:1px solid #fff;border-left:1px solid #fff;border-right:2px solid #696969;border-bottom:2px solid #696969"></div><div class="abs" style="left:71px;top:392px;width:47px;height:9px;background:#c0c0c0"></div><div class="abs" style="left:120px;top:389px;width:50px;height:17px;background:#e8e8e8;border-top:1px solid #fff;border-left:1px solid #fff;border-right:2px solid #696969;border-bottom:2px solid #696969"></div><div class="abs" style="left:121px;top:392px;width:47px;height:9px;background:#c0c0c0"></div><svg class="abs" style="left:0;top:0" width="188" height="558"><polyline points="22.0,398.54 22.5,398.26 23.0,397.97 23.5,397.67 24.0,397.35 24.5,397.03 25.0,396.71 25.5,396.39 26.0,396.07 26.5,395.77 27.0,395.48 27.5,395.21 28.0,394.97 28.5,394.75 29.0,394.55 29.5,394.39 30.0,394.27 30.5,394.17 31.0,394.12 31.5,394.10 32.0,394.12 32.5,394.17 33.0,394.27 33.5,394.39 34.0,394.55 34.5,394.75 35.0,394.97 35.5,395.21 36.0,395.48 36.5,395.77 37.0,396.07 37.5,396.39 38.0,396.71 38.5,397.03 39.0,397.35 39.5,397.67 40.0,397.97 40.5,398.26 41.0,398.54 41.5,398.79 42.0,399.01 42.5,399.21 43.0,399.38 43.5,399.51 44.0,399.61 44.5,399.67 45.0,399.70 45.5,399.69 46.0,399.64 46.5,399.55 47.0,399.43 47.5,399.28 48.0,399.09 48.5,398.88 49.0,398.64 49.5,398.37 50.0,398.09 50.5,397.79 51.0,397.48 51.5,397.16 52.0,396.84 52.5,396.51 53.0,396.20 53.5,395.89 54.0,395.59 54.5,395.32 55.0,395.06 55.5,394.83 56.0,394.63 56.5,394.45 57.0,394.31 57.5,394.21 58.0,394.14 58.5,394.10 59.0,394.11 59.5,394.15 60.0,394.23 60.5,394.34 61.0,394.49 61.5,394.67 62.0,394.87 62.5,395.11 63.0,395.37 63.5,395.65 64.0,395.95 64.5,396.26 65.0,396.58 65.5,396.90 66.0,397.22 66.5,397.54 67.0,397.85" fill="none" stroke="#000" stroke-width="1.1"/><polyline points="72,399.2 81.5,394.1 91.7,399.5 101.2,394 110.7,399.5 117,396" fill="none" stroke="#000" stroke-width="1.1"/><polyline points="122,399.5 131.5,399.5 131.5,394.5 140.5,394.5 140.5,399.5 148.5,399.5 148.5,394.5 157.5,394.5 157.5,399.5 166.5,399.5" fill="none" stroke="#000" stroke-width="1" shape-rendering="crispEdges"/></svg><div class="abs t" style="left:20.7px;top:426.52px;font-size:9.3px;line-height:9.3px;color:#000;">Frequency</div><div class="abs" style="left:74px;top:423px;width:66px;height:16px;background:#fff;border-top:2px solid #696969;border-left:2px solid #696969;border-right:1px solid #e3e3e3;border-bottom:1px solid #e3e3e3;box-shadow:inset 1px 1px 0 #a0a0a0"></div><div class="abs" style="left:139px;top:423px;width:32px;height:16px;background:#fff;border-top:2px solid #696969;border-left:2px solid #696969;border-right:1px solid #e3e3e3;border-bottom:1px solid #e3e3e3;box-shadow:inset 1px 1px 0 #a0a0a0"></div><div class="abs t" style="left:78px;top:426.52px;font-size:9.3px;line-height:9.3px;color:#000;">1</div><div class="abs t" style="left:55px;top:425.52px;width:200px;text-align:center;font-size:9.3px;line-height:9.3px;color:#000;">kHz</div><div class="abs t" style="left:20.7px;top:444.52px;font-size:9.3px;line-height:9.3px;color:#000;">Duty Cycle</div><div class="abs" style="left:74px;top:441px;width:66px;height:16px;background:#f0f0f0;border-top:2px solid #696969;border-left:2px solid #696969;border-right:1px solid #e3e3e3;border-bottom:1px solid #e3e3e3;box-shadow:inset 1px 1px 0 #a0a0a0"></div><div class="abs" style="left:139px;top:441px;width:32px;height:16px;background:#f0f0f0;border-top:2px solid #696969;border-left:2px solid #696969;border-right:1px solid #e3e3e3;border-bottom:1px solid #e3e3e3;box-shadow:inset 1px 1px 0 #a0a0a0"></div><div class="abs t" style="left:78px;top:444.52px;font-size:9.3px;line-height:9.3px;color:#a0a0a0;">50</div><div class="abs t" style="left:55px;top:443.52px;width:200px;text-align:center;font-size:9.3px;line-height:9.3px;color:#a0a0a0;">%</div><div class="abs t" style="left:20.7px;top:462.52px;font-size:9.3px;line-height:9.3px;color:#000;">Amplitude</div><div class="abs" style="left:74px;top:459px;width:66px;height:16px;background:#fff;border-top:2px solid #696969;border-left:2px solid #696969;border-right:1px solid #e3e3e3;border-bottom:1px solid #e3e3e3;box-shadow:inset 1px 1px 0 #a0a0a0"></div><div class="abs" style="left:139px;top:459px;width:32px;height:16px;background:#fff;border-top:2px solid #696969;border-left:2px solid #696969;border-right:1px solid #e3e3e3;border-bottom:1px solid #e3e3e3;box-shadow:inset 1px 1px 0 #a0a0a0"></div><div class="abs t" style="left:78px;top:462.52px;font-size:9.3px;line-height:9.3px;color:#000;">5</div><div class="abs t" style="left:55px;top:461.52px;width:200px;text-align:center;font-size:9.3px;line-height:9.3px;color:#000;">V</div><div class="abs t" style="left:20.7px;top:480.52px;font-size:9.3px;line-height:9.3px;color:#000;">Offset</div><div class="abs" style="left:74px;top:477px;width:66px;height:16px;background:#fff;border-top:2px solid #696969;border-left:2px solid #696969;border-right:1px solid #e3e3e3;border-bottom:1px solid #e3e3e3;box-shadow:inset 1px 1px 0 #a0a0a0"></div><div class="abs" style="left:139px;top:477px;width:32px;height:16px;background:#fff;border-top:2px solid #696969;border-left:2px solid #696969;border-right:1px solid #e3e3e3;border-bottom:1px solid #e3e3e3;box-shadow:inset 1px 1px 0 #a0a0a0"></div><div class="abs t" style="left:78px;top:480.52px;font-size:9.3px;line-height:9.3px;color:#000;">0</div><div class="abs t" style="left:55px;top:479.52px;width:200px;text-align:center;font-size:9.3px;line-height:9.3px;color:#000;">V</div><div class="abs" style="left:40px;top:498px;width:104px;height:17px;background:#f0f0f0;border-top:1px solid #fff;border-left:1px solid #fff;border-right:2px solid #696969;border-bottom:2px solid #696969;box-shadow:inset -1px -1px 0 #a0a0a0"></div><div class="abs t" style="left:-8.0px;top:502.02px;width:200px;text-align:center;font-size:9.3px;line-height:9.3px;color:#a0a0a0;">Set Rise/Fall Time</div><div class="abs t" style="left:-70.5px;top:520.52px;width:200px;text-align:center;font-size:9.3px;line-height:9.3px;color:#000;">+</div><div class="abs t" style="left:-11px;top:522.52px;width:200px;text-align:center;font-size:9.3px;line-height:9.3px;color:#000;">Common</div><div class="abs t" style="left:48px;top:523.52px;width:200px;text-align:center;font-size:9.3px;line-height:9.3px;color:#000;">–</div><div class="abs" style="left:25px;top:534px;width:10px;height:10px;border-radius:50%;border:1px solid;border-color:#a0a0a0 #fff #fff #a0a0a0;box-shadow:inset 1px 1px 0 #696969"></div><div class="abs" style="left:84px;top:534px;width:10px;height:10px;border-radius:50%;border:1px solid;border-color:#a0a0a0 #fff #fff #a0a0a0;box-shadow:inset 1px 1px 0 #696969"></div><div class="abs" style="left:87px;top:537px;width:4px;height:4px;border-radius:50%;background:#909090"></div><div class="abs" style="left:143px;top:534px;width:10px;height:10px;border-radius:50%;border:1px solid;border-color:#a0a0a0 #fff #fff #a0a0a0;box-shadow:inset 1px 1px 0 #696969"></div><div class="abs" style="left:146px;top:537px;width:4px;height:4px;border-radius:50%;background:#909090"></div><div class="abs" style="left:682px;top:383px;width:271px;height:190px;border:1px solid #5b636c;border-radius:6px 6px 5px 5px;background:linear-gradient(180deg,#eef5fb 0,#d6e8f7 5px,#e4f1fa 11px,#f3faff 20px,#f6fbfe 100%);box-shadow:1px 1px 2px rgba(0,0,0,0.25)"></div><div class="abs t" style="left:690.7px;top:391.22px;font-size:12px;line-height:12px;color:#111;">Distortion Analyzer-XD</div><div class="abs" style="left:689px;top:411px;width:254px;height:150px;background:#f0f0f0;border:1px solid #a0a0a0"></div><div class="abs t" style="left:718px;top:415.52px;width:200px;text-align:center;font-size:9.3px;line-height:9.3px;color:#000;">Total Harmonic Distortion(THD)</div><div class="abs" style="left:692px;top:428px;width:252px;height:32px;background:#f0f0f0;border-top:2px solid #fff;border-left:2px solid #fff;border-right:2px solid #696969;border-bottom:2px solid #696969"></div><div class="abs" style="left:694px;top:430px;width:248px;height:28px;background:#000;border-top:2px solid #696969;border-left:2px solid #696969;border-right:3px solid #f4f4f4;border-bottom:3px solid #f4f4f4"></div><div class="abs t" style="left:726.5px;top:434.03px;width:200px;text-align:center;font-size:15.5px;line-height:15.5px;color:#eaf2ff;">0.097 %</div><div class="abs" style="left:695px;top:477px;width:36px;height:24px;background:#f0f0f0;border-top:1px solid #fff;border-left:1px solid #fff;border-right:2px solid #696969;border-bottom:2px solid #696969;box-shadow:inset -1px -1px 0 #a0a0a0"></div><div class="abs t" style="left:613.0px;top:483.52px;width:200px;text-align:center;font-size:9.3px;line-height:9.3px;color:#000;">Start</div><div class="abs" style="left:695px;top:507px;width:35px;height:23px;background-color:#f7f7f7;background-image:linear-gradient(45deg,#e6e6e6 25%,transparent 25%,transparent 75%,#e6e6e6 75%),linear-gradient(45deg,#e6e6e6 25%,transparent 25%,transparent 75%,#e6e6e6 75%);background-size:2px 2px;background-position:0 0,1px 1px;border-top:2px solid #696969;border-left:2px solid #696969;border-right:1px solid #fff;border-bottom:1px solid #fff"></div><div class="abs t" style="left:613.0px;top:513.32px;width:200px;text-align:center;font-size:9.3px;line-height:9.3px;color:#000;">Stop</div><div class="abs" style="left:739px;top:465px;width:203px;height:79px;border:1px solid #a0a0a0;box-shadow:1px 1px 0 #fff, inset 1px 1px 0 #fff"></div><div class="abs t" style="left:525px;top:476.52px;width:300px;text-align:right;font-size:9.3px;line-height:9.3px;color:#000;">Fundamental Freq.</div><div class="abs" style="left:828px;top:476px;width:77px;height:16px;background:#fff;border-top:2px solid #696969;border-left:2px solid #696969;border-right:1px solid #e3e3e3;border-bottom:1px solid #e3e3e3;box-shadow:inset 1px 1px 0 #a0a0a0"></div><div class="abs t" style="left:766px;top:479.52px;width:200px;text-align:center;font-size:9.3px;line-height:9.3px;color:#000;">1</div><div class="abs" style="left:905px;top:476px;width:31px;height:16px;background:#fff;border-top:2px solid #696969;border-left:2px solid #696969;border-right:1px solid #e3e3e3;border-bottom:1px solid #e3e3e3;box-shadow:inset 1px 1px 0 #a0a0a0"></div><div class="abs t" style="left:820px;top:477.52px;width:200px;text-align:center;font-size:9.3px;line-height:9.3px;color:#000;">kHz</div><div class="abs t" style="left:525px;top:503.52px;width:300px;text-align:right;font-size:9.3px;line-height:9.3px;color:#000;">Resolution Freq.</div><div class="abs" style="left:828px;top:503px;width:108px;height:18px;background:#fff;border-top:2px solid #696969;border-left:2px solid #696969;border-right:1px solid #e3e3e3;border-bottom:1px solid #e3e3e3;box-shadow:inset 1px 1px 0 #a0a0a0"></div><div class="abs t" style="left:832px;top:507.52px;font-size:9.3px;line-height:9.3px;color:#000;">100 Hz</div><div class="abs" style="left:918px;top:505px;width:16px;height:14px;background:#f0f0f0;border-top:1px solid #fff;border-left:1px solid #fff;border-right:2px solid #696969;border-bottom:2px solid #696969;box-shadow:inset -1px -1px 0 #a0a0a0"></div><div class="abs" style="left:921px;top:510px;width:0;height:0;border-left:5px solid transparent;border-right:5px solid transparent;border-top:5px solid #000"></div><div class="abs" style="left:828px;top:522px;width:108px;height:18px;background:#f0f0f0;border-top:1px solid #a0a0a0;border-left:1px solid #a0a0a0;border-right:1px solid #fff;border-bottom:1px solid #fff"></div><div class="abs t" style="left:782px;top:525.52px;width:200px;text-align:center;font-size:9.3px;line-height:9.3px;color:#000;">100 Hz</div><div class="abs" style="left:695px;top:554px;width:154px;height:30px;border:1px solid #a0a0a0;box-shadow:1px 1px 0 #fff, inset 1px 1px 0 #fff"></div><div class="abs t" style="left:701px;top:548.92px;font-size:9.3px;line-height:9.3px;color:#000;background:#f0f0f0;padding:0 2px">Controls</div><div class="abs" style="left:851px;top:554px;width:52px;height:30px;border:1px solid #a0a0a0;box-shadow:1px 1px 0 #fff, inset 1px 1px 0 #fff"></div><div class="abs t" style="left:857px;top:548.92px;font-size:9.3px;line-height:9.3px;color:#000;background:#f0f0f0;padding:0 2px">Display</div><div class="abs" style="left:1257px;top:12px;width:5px;height:401px;background:linear-gradient(90deg,#a8adb3,#d0d4d8 2px,#e4e8ec)"></div><div class="abs" style="left:813px;top:8px;width:444px;height:405px;border:1px solid #5b636c;border-radius:6px 6px 5px 5px;background:linear-gradient(180deg,#eef5fb 0,#d6e8f7 5px,#e4f1fa 11px,#f3faff 20px,#f6fbfe 100%);box-shadow:1px 1px 2px rgba(0,0,0,0.25)"></div><div class="abs t" style="left:821.5px;top:16.91px;font-size:11.6px;line-height:11.6px;color:#111;">Oscilloscope-XSC1</div><div class="abs" style="left:1204px;top:9px;width:46px;height:19px;border:1px solid #8a929c;border-top:none;border-radius:0 0 4px 4px;background:linear-gradient(#cfe3f7,#e6f4fc 50%,#f4fcff)"></div><svg class="abs" style="left:1219.5px;top:10px" width="16" height="16"><g stroke-linecap="round"><path d="M4.5,4.5 L11.5,11.5 M11.5,4.5 L4.5,11.5" stroke="#283048" stroke-width="4.4"/><path d="M4.5,4.5 L11.5,11.5 M11.5,4.5 L4.5,11.5" stroke="#fbfbfb" stroke-width="2.2"/></g></svg><div class="abs" style="left:820px;top:37px;width:430px;height:370px;background:#f0f0f0"></div><div class="abs" style="left:820px;top:37px;width:429px;height:233px;background:#fff;border-left:1px solid #646464;border-top:1px solid #646464;border-right:2px solid #8c8c8c"></div><div class="abs" style="left:824px;top:41px;width:421px;height:226px;background:#000;box-shadow:inset 1px 1px 0 #6a6a6a, inset 4px 4px 0 #9a9a9a, inset -1px -1px 0 #6a6a6a, inset -2px -2px 0 #c8c8c8"></div><svg class="abs" style="left:0;top:0" width="1262" height="558" shape-rendering="crispEdges"><rect x="839" y="64" width="393" height="1" fill="#ffffff"/><rect x="839" y="254" width="393" height="1" fill="#ffffff"/><rect x="1231" y="64" width="1" height="191" fill="#ffffff"/><rect x="840" y="95" width="3" height="1" fill="#e8e8e8"/><rect x="846" y="95" width="3" height="1" fill="#e8e8e8"/><rect x="852" y="95" width="3" height="1" fill="#e8e8e8"/><rect x="858" y="95" width="3" height="1" fill="#e8e8e8"/><rect x="864" y="95" width="3" height="1" fill="#e8e8e8"/><rect x="870" y="95" width="3" height="1" fill="#e8e8e8"/><rect x="876" y="95" width="3" height="1" fill="#e8e8e8"/><rect x="882" y="95" width="3" height="1" fill="#e8e8e8"/><rect x="888" y="95" width="3" height="1" fill="#e8e8e8"/><rect x="894" y="95" width="3" height="1" fill="#e8e8e8"/><rect x="900" y="95" width="3" height="1" fill="#e8e8e8"/><rect x="906" y="95" width="3" height="1" fill="#e8e8e8"/><rect x="912" y="95" width="3" height="1" fill="#e8e8e8"/><rect x="918" y="95" width="3" height="1" fill="#e8e8e8"/><rect x="924" y="95" width="3" height="1" fill="#e8e8e8"/><rect x="930" y="95" width="3" height="1" fill="#e8e8e8"/><rect x="936" y="95" width="3" height="1" fill="#e8e8e8"/><rect x="942" y="95" width="3" height="1" fill="#e8e8e8"/><rect x="948" y="95" width="3" height="1" fill="#e8e8e8"/><rect x="954" y="95" width="3" height="1" fill="#e8e8e8"/><rect x="960" y="95" width="3" height="1" fill="#e8e8e8"/><rect x="966" y="95" width="3" height="1" fill="#e8e8e8"/><rect x="972" y="95" width="3" height="1" fill="#e8e8e8"/><rect x="978" y="95" width="3" height="1" fill="#e8e8e8"/><rect x="984" y="95" width="3" height="1" fill="#e8e8e8"/><rect x="990" y="95" width="3" height="1" fill="#e8e8e8"/><rect x="996" y="95" width="3" height="1" fill="#e8e8e8"/><rect x="1002" y="95" width="3" height="1" fill="#e8e8e8"/><rect x="1008" y="95" width="3" height="1" fill="#e8e8e8"/><rect x="1014" y="95" width="3" height="1" fill="#e8e8e8"/><rect x="1020" y="95" width="3" height="1" fill="#e8e8e8"/><rect x="1026" y="95" width="3" height="1" fill="#e8e8e8"/><rect x="1032" y="95" width="3" height="1" fill="#e8e8e8"/><rect x="1038" y="95" width="3" height="1" fill="#e8e8e8"/><rect x="1044" y="95" width="3" height="1" fill="#e8e8e8"/><rect x="1050" y="95" width="3" height="1" fill="#e8e8e8"/><rect x="1056" y="95" width="3" height="1" fill="#e8e8e8"/><rect x="1062" y="95" width="3" height="1" fill="#e8e8e8"/><rect x="1068" y="95" width="3" height="1" fill="#e8e8e8"/><rect x="1074" y="95" width="3" height="1" fill="#e8e8e8"/><rect x="1080" y="95" width="3" height="1" fill="#e8e8e8"/><rect x="1086" y="95" width="3" height="1" fill="#e8e8e8"/><rect x="1092" y="95" width="3" height="1" fill="#e8e8e8"/><rect x="1098" y="95" width="3" height="1" fill="#e8e8e8"/><rect x="1104" y="95" width="3" height="1" fill="#e8e8e8"/><rect x="1110" y="95" width="3" height="1" fill="#e8e8e8"/><rect x="1116" y="95" width="3" height="1" fill="#e8e8e8"/><rect x="1122" y="95" width="3" height="1" fill="#e8e8e8"/><rect x="1128" y="95" width="3" height="1" fill="#e8e8e8"/><rect x="1134" y="95" width="3" height="1" fill="#e8e8e8"/><rect x="1140" y="95" width="3" height="1" fill="#e8e8e8"/><rect x="1146" y="95" width="3" height="1" fill="#e8e8e8"/><rect x="1152" y="95" width="3" height="1" fill="#e8e8e8"/><rect x="1158" y="95" width="3" height="1" fill="#e8e8e8"/><rect x="1164" y="95" width="3" height="1" fill="#e8e8e8"/><rect x="1170" y="95" width="3" height="1" fill="#e8e8e8"/><rect x="1176" y="95" width="3" height="1" fill="#e8e8e8"/><rect x="1182" y="95" width="3" height="1" fill="#e8e8e8"/><rect x="1188" y="95" width="3" height="1" fill="#e8e8e8"/><rect x="1194" y="95" width="3" height="1" fill="#e8e8e8"/><rect x="1200" y="95" width="3" height="1" fill="#e8e8e8"/><rect x="1206" y="95" width="3" height="1" fill="#e8e8e8"/><rect x="1212" y="95" width="3" height="1" fill="#e8e8e8"/><rect x="1218" y="95" width="3" height="1" fill="#e8e8e8"/><rect x="1224" y="95" width="3" height="1" fill="#e8e8e8"/><rect x="1230" y="95" width="3" height="1" fill="#e8e8e8"/><rect x="840" y="127" width="3" height="1" fill="#e8e8e8"/><rect x="846" y="127" width="3" height="1" fill="#e8e8e8"/><rect x="852" y="127" width="3" height="1" fill="#e8e8e8"/><rect x="858" y="127" width="3" height="1" fill="#e8e8e8"/><rect x="864" y="127" width="3" height="1" fill="#e8e8e8"/><rect x="870" y="127" width="3" height="1" fill="#e8e8e8"/><rect x="876" y="127" width="3" height="1" fill="#e8e8e8"/><rect x="882" y="127" width="3" height="1" fill="#e8e8e8"/><rect x="888" y="127" width="3" height="1" fill="#e8e8e8"/><rect x="894" y="127" width="3" height="1" fill="#e8e8e8"/><rect x="900" y="127" width="3" height="1" fill="#e8e8e8"/><rect x="906" y="127" width="3" height="1" fill="#e8e8e8"/><rect x="912" y="127" width="3" height="1" fill="#e8e8e8"/><rect x="918" y="127" width="3" height="1" fill="#e8e8e8"/><rect x="924" y="127" width="3" height="1" fill="#e8e8e8"/><rect x="930" y="127" width="3" height="1" fill="#e8e8e8"/><rect x="936" y="127" width="3" height="1" fill="#e8e8e8"/><rect x="942" y="127" width="3" height="1" fill="#e8e8e8"/><rect x="948" y="127" width="3" height="1" fill="#e8e8e8"/><rect x="954" y="127" width="3" height="1" fill="#e8e8e8"/><rect x="960" y="127" width="3" height="1" fill="#e8e8e8"/><rect x="966" y="127" width="3" height="1" fill="#e8e8e8"/><rect x="972" y="127" width="3" height="1" fill="#e8e8e8"/><rect x="978" y="127" width="3" height="1" fill="#e8e8e8"/><rect x="984" y="127" width="3" height="1" fill="#e8e8e8"/><rect x="990" y="127" width="3" height="1" fill="#e8e8e8"/><rect x="996" y="127" width="3" height="1" fill="#e8e8e8"/><rect x="1002" y="127" width="3" height="1" fill="#e8e8e8"/><rect x="1008" y="127" width="3" height="1" fill="#e8e8e8"/><rect x="1014" y="127" width="3" height="1" fill="#e8e8e8"/><rect x="1020" y="127" width="3" height="1" fill="#e8e8e8"/><rect x="1026" y="127" width="3" height="1" fill="#e8e8e8"/><rect x="1032" y="127" width="3" height="1" fill="#e8e8e8"/><rect x="1038" y="127" width="3" height="1" fill="#e8e8e8"/><rect x="1044" y="127" width="3" height="1" fill="#e8e8e8"/><rect x="1050" y="127" width="3" height="1" fill="#e8e8e8"/><rect x="1056" y="127" width="3" height="1" fill="#e8e8e8"/><rect x="1062" y="127" width="3" height="1" fill="#e8e8e8"/><rect x="1068" y="127" width="3" height="1" fill="#e8e8e8"/><rect x="1074" y="127" width="3" height="1" fill="#e8e8e8"/><rect x="1080" y="127" width="3" height="1" fill="#e8e8e8"/><rect x="1086" y="127" width="3" height="1" fill="#e8e8e8"/><rect x="1092" y="127" width="3" height="1" fill="#e8e8e8"/><rect x="1098" y="127" width="3" height="1" fill="#e8e8e8"/><rect x="1104" y="127" width="3" height="1" fill="#e8e8e8"/><rect x="1110" y="127" width="3" height="1" fill="#e8e8e8"/><rect x="1116" y="127" width="3" height="1" fill="#e8e8e8"/><rect x="1122" y="127" width="3" height="1" fill="#e8e8e8"/><rect x="1128" y="127" width="3" height="1" fill="#e8e8e8"/><rect x="1134" y="127" width="3" height="1" fill="#e8e8e8"/><rect x="1140" y="127" width="3" height="1" fill="#e8e8e8"/><rect x="1146" y="127" width="3" height="1" fill="#e8e8e8"/><rect x="1152" y="127" width="3" height="1" fill="#e8e8e8"/><rect x="1158" y="127" width="3" height="1" fill="#e8e8e8"/><rect x="1164" y="127" width="3" height="1" fill="#e8e8e8"/><rect x="1170" y="127" width="3" height="1" fill="#e8e8e8"/><rect x="1176" y="127" width="3" height="1" fill="#e8e8e8"/><rect x="1182" y="127" width="3" height="1" fill="#e8e8e8"/><rect x="1188" y="127" width="3" height="1" fill="#e8e8e8"/><rect x="1194" y="127" width="3" height="1" fill="#e8e8e8"/><rect x="1200" y="127" width="3" height="1" fill="#e8e8e8"/><rect x="1206" y="127" width="3" height="1" fill="#e8e8e8"/><rect x="1212" y="127" width="3" height="1" fill="#e8e8e8"/><rect x="1218" y="127" width="3" height="1" fill="#e8e8e8"/><rect x="1224" y="127" width="3" height="1" fill="#e8e8e8"/><rect x="1230" y="127" width="3" height="1" fill="#e8e8e8"/><rect x="840" y="191" width="3" height="1" fill="#e8e8e8"/><rect x="846" y="191" width="3" height="1" fill="#e8e8e8"/><rect x="852" y="191" width="3" height="1" fill="#e8e8e8"/><rect x="858" y="191" width="3" height="1" fill="#e8e8e8"/><rect x="864" y="191" width="3" height="1" fill="#e8e8e8"/><rect x="870" y="191" width="3" height="1" fill="#e8e8e8"/><rect x="876" y="191" width="3" height="1" fill="#e8e8e8"/><rect x="882" y="191" width="3" height="1" fill="#e8e8e8"/><rect x="888" y="191" width="3" height="1" fill="#e8e8e8"/><rect x="894" y="191" width="3" height="1" fill="#e8e8e8"/><rect x="900" y="191" width="3" height="1" fill="#e8e8e8"/><rect x="906" y="191" width="3" height="1" fill="#e8e8e8"/><rect x="912" y="191" width="3" height="1" fill="#e8e8e8"/><rect x="918" y="191" width="3" height="1" fill="#e8e8e8"/><rect x="924" y="191" width="3" height="1" fill="#e8e8e8"/><rect x="930" y="191" width="3" height="1" fill="#e8e8e8"/><rect x="936" y="191" width="3" height="1" fill="#e8e8e8"/><rect x="942" y="191" width="3" height="1" fill="#e8e8e8"/><rect x="948" y="191" width="3" height="1" fill="#e8e8e8"/><rect x="954" y="191" width="3" height="1" fill="#e8e8e8"/><rect x="960" y="191" width="3" height="1" fill="#e8e8e8"/><rect x="966" y="191" width="3" height="1" fill="#e8e8e8"/><rect x="972" y="191" width="3" height="1" fill="#e8e8e8"/><rect x="978" y="191" width="3" height="1" fill="#e8e8e8"/><rect x="984" y="191" width="3" height="1" fill="#e8e8e8"/><rect x="990" y="191" width="3" height="1" fill="#e8e8e8"/><rect x="996" y="191" width="3" height="1" fill="#e8e8e8"/><rect x="1002" y="191" width="3" height="1" fill="#e8e8e8"/><rect x="1008" y="191" width="3" height="1" fill="#e8e8e8"/><rect x="1014" y="191" width="3" height="1" fill="#e8e8e8"/><rect x="1020" y="191" width="3" height="1" fill="#e8e8e8"/><rect x="1026" y="191" width="3" height="1" fill="#e8e8e8"/><rect x="1032" y="191" width="3" height="1" fill="#e8e8e8"/><rect x="1038" y="191" width="3" height="1" fill="#e8e8e8"/><rect x="1044" y="191" width="3" height="1" fill="#e8e8e8"/><rect x="1050" y="191" width="3" height="1" fill="#e8e8e8"/><rect x="1056" y="191" width="3" height="1" fill="#e8e8e8"/><rect x="1062" y="191" width="3" height="1" fill="#e8e8e8"/><rect x="1068" y="191" width="3" height="1" fill="#e8e8e8"/><rect x="1074" y="191" width="3" height="1" fill="#e8e8e8"/><rect x="1080" y="191" width="3" height="1" fill="#e8e8e8"/><rect x="1086" y="191" width="3" height="1" fill="#e8e8e8"/><rect x="1092" y="191" width="3" height="1" fill="#e8e8e8"/><rect x="1098" y="191" width="3" height="1" fill="#e8e8e8"/><rect x="1104" y="191" width="3" height="1" fill="#e8e8e8"/><rect x="1110" y="191" width="3" height="1" fill="#e8e8e8"/><rect x="1116" y="191" width="3" height="1" fill="#e8e8e8"/><rect x="1122" y="191" width="3" height="1" fill="#e8e8e8"/><rect x="1128" y="191" width="3" height="1" fill="#e8e8e8"/><rect x="1134" y="191" width="3" height="1" fill="#e8e8e8"/><rect x="1140" y="191" width="3" height="1" fill="#e8e8e8"/><rect x="1146" y="191" width="3" height="1" fill="#e8e8e8"/><rect x="1152" y="191" width="3" height="1" fill="#e8e8e8"/><rect x="1158" y="191" width="3" height="1" fill="#e8e8e8"/><rect x="1164" y="191" width="3" height="1" fill="#e8e8e8"/><rect x="1170" y="191" width="3" height="1" fill="#e8e8e8"/><rect x="1176" y="191" width="3" height="1" fill="#e8e8e8"/><rect x="1182" y="191" width="3" height="1" fill="#e8e8e8"/><rect x="1188" y="191" width="3" height="1" fill="#e8e8e8"/><rect x="1194" y="191" width="3" height="1" fill="#e8e8e8"/><rect x="1200" y="191" width="3" height="1" fill="#e8e8e8"/><rect x="1206" y="191" width="3" height="1" fill="#e8e8e8"/><rect x="1212" y="191" width="3" height="1" fill="#e8e8e8"/><rect x="1218" y="191" width="3" height="1" fill="#e8e8e8"/><rect x="1224" y="191" width="3" height="1" fill="#e8e8e8"/><rect x="1230" y="191" width="3" height="1" fill="#e8e8e8"/><rect x="840" y="223" width="3" height="1" fill="#e8e8e8"/><rect x="846" y="223" width="3" height="1" fill="#e8e8e8"/><rect x="852" y="223" width="3" height="1" fill="#e8e8e8"/><rect x="858" y="223" width="3" height="1" fill="#e8e8e8"/><rect x="864" y="223" width="3" height="1" fill="#e8e8e8"/><rect x="870" y="223" width="3" height="1" fill="#e8e8e8"/><rect x="876" y="223" width="3" height="1" fill="#e8e8e8"/><rect x="882" y="223" width="3" height="1" fill="#e8e8e8"/><rect x="888" y="223" width="3" height="1" fill="#e8e8e8"/><rect x="894" y="223" width="3" height="1" fill="#e8e8e8"/><rect x="900" y="223" width="3" height="1" fill="#e8e8e8"/><rect x="906" y="223" width="3" height="1" fill="#e8e8e8"/><rect x="912" y="223" width="3" height="1" fill="#e8e8e8"/><rect x="918" y="223" width="3" height="1" fill="#e8e8e8"/><rect x="924" y="223" width="3" height="1" fill="#e8e8e8"/><rect x="930" y="223" width="3" height="1" fill="#e8e8e8"/><rect x="936" y="223" width="3" height="1" fill="#e8e8e8"/><rect x="942" y="223" width="3" height="1" fill="#e8e8e8"/><rect x="948" y="223" width="3" height="1" fill="#e8e8e8"/><rect x="954" y="223" width="3" height="1" fill="#e8e8e8"/><rect x="960" y="223" width="3" height="1" fill="#e8e8e8"/><rect x="966" y="223" width="3" height="1" fill="#e8e8e8"/><rect x="972" y="223" width="3" height="1" fill="#e8e8e8"/><rect x="978" y="223" width="3" height="1" fill="#e8e8e8"/><rect x="984" y="223" width="3" height="1" fill="#e8e8e8"/><rect x="990" y="223" width="3" height="1" fill="#e8e8e8"/><rect x="996" y="223" width="3" height="1" fill="#e8e8e8"/><rect x="1002" y="223" width="3" height="1" fill="#e8e8e8"/><rect x="1008" y="223" width="3" height="1" fill="#e8e8e8"/><rect x="1014" y="223" width="3" height="1" fill="#e8e8e8"/><rect x="1020" y="223" width="3" height="1" fill="#e8e8e8"/><rect x="1026" y="223" width="3" height="1" fill="#e8e8e8"/><rect x="1032" y="223" width="3" height="1" fill="#e8e8e8"/><rect x="1038" y="223" width="3" height="1" fill="#e8e8e8"/><rect x="1044" y="223" width="3" height="1" fill="#e8e8e8"/><rect x="1050" y="223" width="3" height="1" fill="#e8e8e8"/><rect x="1056" y="223" width="3" height="1" fill="#e8e8e8"/><rect x="1062" y="223" width="3" height="1" fill="#e8e8e8"/><rect x="1068" y="223" width="3" height="1" fill="#e8e8e8"/><rect x="1074" y="223" width="3" height="1" fill="#e8e8e8"/><rect x="1080" y="223" width="3" height="1" fill="#e8e8e8"/><rect x="1086" y="223" width="3" height="1" fill="#e8e8e8"/><rect x="1092" y="223" width="3" height="1" fill="#e8e8e8"/><rect x="1098" y="223" width="3" height="1" fill="#e8e8e8"/><rect x="1104" y="223" width="3" height="1" fill="#e8e8e8"/><rect x="1110" y="223" width="3" height="1" fill="#e8e8e8"/><rect x="1116" y="223" width="3" height="1" fill="#e8e8e8"/><rect x="1122" y="223" width="3" height="1" fill="#e8e8e8"/><rect x="1128" y="223" width="3" height="1" fill="#e8e8e8"/><rect x="1134" y="223" width="3" height="1" fill="#e8e8e8"/><rect x="1140" y="223" width="3" height="1" fill="#e8e8e8"/><rect x="1146" y="223" width="3" height="1" fill="#e8e8e8"/><rect x="1152" y="223" width="3" height="1" fill="#e8e8e8"/><rect x="1158" y="223" width="3" height="1" fill="#e8e8e8"/><rect x="1164" y="223" width="3" height="1" fill="#e8e8e8"/><rect x="1170" y="223" width="3" height="1" fill="#e8e8e8"/><rect x="1176" y="223" width="3" height="1" fill="#e8e8e8"/><rect x="1182" y="223" width="3" height="1" fill="#e8e8e8"/><rect x="1188" y="223" width="3" height="1" fill="#e8e8e8"/><rect x="1194" y="223" width="3" height="1" fill="#e8e8e8"/><rect x="1200" y="223" width="3" height="1" fill="#e8e8e8"/><rect x="1206" y="223" width="3" height="1" fill="#e8e8e8"/><rect x="1212" y="223" width="3" height="1" fill="#e8e8e8"/><rect x="1218" y="223" width="3" height="1" fill="#e8e8e8"/><rect x="1224" y="223" width="3" height="1" fill="#e8e8e8"/><rect x="1230" y="223" width="3" height="1" fill="#e8e8e8"/><rect x="878" y="66" width="1" height="3" fill="#e8e8e8"/><rect x="878" y="72" width="1" height="3" fill="#e8e8e8"/><rect x="878" y="78" width="1" height="3" fill="#e8e8e8"/><rect x="878" y="84" width="1" height="3" fill="#e8e8e8"/><rect x="878" y="90" width="1" height="3" fill="#e8e8e8"/><rect x="878" y="96" width="1" height="3" fill="#e8e8e8"/><rect x="878" y="102" width="1" height="3" fill="#e8e8e8"/><rect x="878" y="108" width="1" height="3" fill="#e8e8e8"/><rect x="878" y="114" width="1" height="3" fill="#e8e8e8"/><rect x="878" y="120" width="1" height="3" fill="#e8e8e8"/><rect x="878" y="126" width="1" height="3" fill="#e8e8e8"/><rect x="878" y="132" width="1" height="3" fill="#e8e8e8"/><rect x="878" y="138" width="1" height="3" fill="#e8e8e8"/><rect x="878" y="144" width="1" height="3" fill="#e8e8e8"/><rect x="878" y="150" width="1" height="3" fill="#e8e8e8"/><rect x="878" y="156" width="1" height="3" fill="#e8e8e8"/><rect x="878" y="162" width="1" height="3" fill="#e8e8e8"/><rect x="878" y="168" width="1" height="3" fill="#e8e8e8"/><rect x="878" y="174" width="1" height="3" fill="#e8e8e8"/><rect x="878" y="180" width="1" height="3" fill="#e8e8e8"/><rect x="878" y="186" width="1" height="3" fill="#e8e8e8"/><rect x="878" y="192" width="1" height="3" fill="#e8e8e8"/><rect x="878" y="198" width="1" height="3" fill="#e8e8e8"/><rect x="878" y="204" width="1" height="3" fill="#e8e8e8"/><rect x="878" y="210" width="1" height="3" fill="#e8e8e8"/><rect x="878" y="216" width="1" height="3" fill="#e8e8e8"/><rect x="878" y="222" width="1" height="3" fill="#e8e8e8"/><rect x="878" y="228" width="1" height="3" fill="#e8e8e8"/><rect x="878" y="234" width="1" height="3" fill="#e8e8e8"/><rect x="878" y="240" width="1" height="3" fill="#e8e8e8"/><rect x="878" y="246" width="1" height="3" fill="#e8e8e8"/><rect x="878" y="252" width="1" height="3" fill="#e8e8e8"/><rect x="917" y="66" width="1" height="3" fill="#e8e8e8"/><rect x="917" y="72" width="1" height="3" fill="#e8e8e8"/><rect x="917" y="78" width="1" height="3" fill="#e8e8e8"/><rect x="917" y="84" width="1" height="3" fill="#e8e8e8"/><rect x="917" y="90" width="1" height="3" fill="#e8e8e8"/><rect x="917" y="96" width="1" height="3" fill="#e8e8e8"/><rect x="917" y="102" width="1" height="3" fill="#e8e8e8"/><rect x="917" y="108" width="1" height="3" fill="#e8e8e8"/><rect x="917" y="114" width="1" height="3" fill="#e8e8e8"/><rect x="917" y="120" width="1" height="3" fill="#e8e8e8"/><rect x="917" y="126" width="1" height="3" fill="#e8e8e8"/><rect x="917" y="132" width="1" height="3" fill="#e8e8e8"/><rect x="917" y="138" width="1" height="3" fill="#e8e8e8"/><rect x="917" y="144" width="1" height="3" fill="#e8e8e8"/><rect x="917" y="150" width="1" height="3" fill="#e8e8e8"/><rect x="917" y="156" width="1" height="3" fill="#e8e8e8"/><rect x="917" y="162" width="1" height="3" fill="#e8e8e8"/><rect x="917" y="168" width="1" height="3" fill="#e8e8e8"/><rect x="917" y="174" width="1" height="3" fill="#e8e8e8"/><rect x="917" y="180" width="1" height="3" fill="#e8e8e8"/><rect x="917" y="186" width="1" height="3" fill="#e8e8e8"/><rect x="917" y="192" width="1" height="3" fill="#e8e8e8"/><rect x="917" y="198" width="1" height="3" fill="#e8e8e8"/><rect x="917" y="204" width="1" height="3" fill="#e8e8e8"/><rect x="917" y="210" width="1" height="3" fill="#e8e8e8"/><rect x="917" y="216" width="1" height="3" fill="#e8e8e8"/><rect x="917" y="222" width="1" height="3" fill="#e8e8e8"/><rect x="917" y="228" width="1" height="3" fill="#e8e8e8"/><rect x="917" y="234" width="1" height="3" fill="#e8e8e8"/><rect x="917" y="240" width="1" height="3" fill="#e8e8e8"/><rect x="917" y="246" width="1" height="3" fill="#e8e8e8"/><rect x="917" y="252" width="1" height="3" fill="#e8e8e8"/><rect x="957" y="66" width="1" height="3" fill="#e8e8e8"/><rect x="957" y="72" width="1" height="3" fill="#e8e8e8"/><rect x="957" y="78" width="1" height="3" fill="#e8e8e8"/><rect x="957" y="84" width="1" height="3" fill="#e8e8e8"/><rect x="957" y="90" width="1" height="3" fill="#e8e8e8"/><rect x="957" y="96" width="1" height="3" fill="#e8e8e8"/><rect x="957" y="102" width="1" height="3" fill="#e8e8e8"/><rect x="957" y="108" width="1" height="3" fill="#e8e8e8"/><rect x="957" y="114" width="1" height="3" fill="#e8e8e8"/><rect x="957" y="120" width="1" height="3" fill="#e8e8e8"/><rect x="957" y="126" width="1" height="3" fill="#e8e8e8"/><rect x="957" y="132" width="1" height="3" fill="#e8e8e8"/><rect x="957" y="138" width="1" height="3" fill="#e8e8e8"/><rect x="957" y="144" width="1" height="3" fill="#e8e8e8"/><rect x="957" y="150" width="1" height="3" fill="#e8e8e8"/><rect x="957" y="156" width="1" height="3" fill="#e8e8e8"/><rect x="957" y="162" width="1" height="3" fill="#e8e8e8"/><rect x="957" y="168" width="1" height="3" fill="#e8e8e8"/><rect x="957" y="174" width="1" height="3" fill="#e8e8e8"/><rect x="957" y="180" width="1" height="3" fill="#e8e8e8"/><rect x="957" y="186" width="1" height="3" fill="#e8e8e8"/><rect x="957" y="192" width="1" height="3" fill="#e8e8e8"/><rect x="957" y="198" width="1" height="3" fill="#e8e8e8"/><rect x="957" y="204" width="1" height="3" fill="#e8e8e8"/><rect x="957" y="210" width="1" height="3" fill="#e8e8e8"/><rect x="957" y="216" width="1" height="3" fill="#e8e8e8"/><rect x="957" y="222" width="1" height="3" fill="#e8e8e8"/><rect x="957" y="228" width="1" height="3" fill="#e8e8e8"/><rect x="957" y="234" width="1" height="3" fill="#e8e8e8"/><rect x="957" y="240" width="1" height="3" fill="#e8e8e8"/><rect x="957" y="246" width="1" height="3" fill="#e8e8e8"/><rect x="957" y="252" width="1" height="3" fill="#e8e8e8"/><rect x="996" y="66" width="1" height="3" fill="#e8e8e8"/><rect x="996" y="72" width="1" height="3" fill="#e8e8e8"/><rect x="996" y="78" width="1" height="3" fill="#e8e8e8"/><rect x="996" y="84" width="1" height="3" fill="#e8e8e8"/><rect x="996" y="90" width="1" height="3" fill="#e8e8e8"/><rect x="996" y="96" width="1" height="3" fill="#e8e8e8"/><rect x="996" y="102" width="1" height="3" fill="#e8e8e8"/><rect x="996" y="108" width="1" height="3" fill="#e8e8e8"/><rect x="996" y="114" width="1" height="3" fill="#e8e8e8"/><rect x="996" y="120" width="1" height="3" fill="#e8e8e8"/><rect x="996" y="126" width="1" height="3" fill="#e8e8e8"/><rect x="996" y="132" width="1" height="3" fill="#e8e8e8"/><rect x="996" y="138" width="1" height="3" fill="#e8e8e8"/><rect x="996" y="144" width="1" height="3" fill="#e8e8e8"/><rect x="996" y="150" width="1" height="3" fill="#e8e8e8"/><rect x="996" y="156" width="1" height="3" fill="#e8e8e8"/><rect x="996" y="162" width="1" height="3" fill="#e8e8e8"/><rect x="996" y="168" width="1" height="3" fill="#e8e8e8"/><rect x="996" y="174" width="1" height="3" fill="#e8e8e8"/><rect x="996" y="180" width="1" height="3" fill="#e8e8e8"/><rect x="996" y="186" width="1" height="3" fill="#e8e8e8"/><rect x="996" y="192" width="1" height="3" fill="#e8e8e8"/><rect x="996" y="198" width="1" height="3" fill="#e8e8e8"/><rect x="996" y="204" width="1" height="3" fill="#e8e8e8"/><rect x="996" y="210" width="1" height="3" fill="#e8e8e8"/><rect x="996" y="216" width="1" height="3" fill="#e8e8e8"/><rect x="996" y="222" width="1" height="3" fill="#e8e8e8"/><rect x="996" y="228" width="1" height="3" fill="#e8e8e8"/><rect x="996" y="234" width="1" height="3" fill="#e8e8e8"/><rect x="996" y="240" width="1" height="3" fill="#e8e8e8"/><rect x="996" y="246" width="1" height="3" fill="#e8e8e8"/><rect x="996" y="252" width="1" height="3" fill="#e8e8e8"/><rect x="1035" y="66" width="1" height="3" fill="#e8e8e8"/><rect x="1035" y="72" width="1" height="3" fill="#e8e8e8"/><rect x="1035" y="78" width="1" height="3" fill="#e8e8e8"/><rect x="1035" y="84" width="1" height="3" fill="#e8e8e8"/><rect x="1035" y="90" width="1" height="3" fill="#e8e8e8"/><rect x="1035" y="96" width="1" height="3" fill="#e8e8e8"/><rect x="1035" y="102" width="1" height="3" fill="#e8e8e8"/><rect x="1035" y="108" width="1" height="3" fill="#e8e8e8"/><rect x="1035" y="114" width="1" height="3" fill="#e8e8e8"/><rect x="1035" y="120" width="1" height="3" fill="#e8e8e8"/><rect x="1035" y="126" width="1" height="3" fill="#e8e8e8"/><rect x="1035" y="132" width="1" height="3" fill="#e8e8e8"/><rect x="1035" y="138" width="1" height="3" fill="#e8e8e8"/><rect x="1035" y="144" width="1" height="3" fill="#e8e8e8"/><rect x="1035" y="150" width="1" height="3" fill="#e8e8e8"/><rect x="1035" y="156" width="1" height="3" fill="#e8e8e8"/><rect x="1035" y="162" width="1" height="3" fill="#e8e8e8"/><rect x="1035" y="168" width="1" height="3" fill="#e8e8e8"/><rect x="1035" y="174" width="1" height="3" fill="#e8e8e8"/><rect x="1035" y="180" width="1" height="3" fill="#e8e8e8"/><rect x="1035" y="186" width="1" height="3" fill="#e8e8e8"/><rect x="1035" y="192" width="1" height="3" fill="#e8e8e8"/><rect x="1035" y="198" width="1" height="3" fill="#e8e8e8"/><rect x="1035" y="204" width="1" height="3" fill="#e8e8e8"/><rect x="1035" y="210" width="1" height="3" fill="#e8e8e8"/><rect x="1035" y="216" width="1" height="3" fill="#e8e8e8"/><rect x="1035" y="222" width="1" height="3" fill="#e8e8e8"/><rect x="1035" y="228" width="1" height="3" fill="#e8e8e8"/><rect x="1035" y="234" width="1" height="3" fill="#e8e8e8"/><rect x="1035" y="240" width="1" height="3" fill="#e8e8e8"/><rect x="1035" y="246" width="1" height="3" fill="#e8e8e8"/><rect x="1035" y="252" width="1" height="3" fill="#e8e8e8"/><rect x="1074" y="66" width="1" height="3" fill="#e8e8e8"/><rect x="1074" y="72" width="1" height="3" fill="#e8e8e8"/><rect x="1074" y="78" width="1" height="3" fill="#e8e8e8"/><rect x="1074" y="84" width="1" height="3" fill="#e8e8e8"/><rect x="1074" y="90" width="1" height="3" fill="#e8e8e8"/><rect x="1074" y="96" width="1" height="3" fill="#e8e8e8"/><rect x="1074" y="102" width="1" height="3" fill="#e8e8e8"/><rect x="1074" y="108" width="1" height="3" fill="#e8e8e8"/><rect x="1074" y="114" width="1" height="3" fill="#e8e8e8"/><rect x="1074" y="120" width="1" height="3" fill="#e8e8e8"/><rect x="1074" y="126" width="1" height="3" fill="#e8e8e8"/><rect x="1074" y="132" width="1" height="3" fill="#e8e8e8"/><rect x="1074" y="138" width="1" height="3" fill="#e8e8e8"/><rect x="1074" y="144" width="1" height="3" fill="#e8e8e8"/><rect x="1074" y="150" width="1" height="3" fill="#e8e8e8"/><rect x="1074" y="156" width="1" height="3" fill="#e8e8e8"/><rect x="1074" y="162" width="1" height="3" fill="#e8e8e8"/><rect x="1074" y="168" width="1" height="3" fill="#e8e8e8"/><rect x="1074" y="174" width="1" height="3" fill="#e8e8e8"/><rect x="1074" y="180" width="1" height="3" fill="#e8e8e8"/><rect x="1074" y="186" width="1" height="3" fill="#e8e8e8"/><rect x="1074" y="192" width="1" height="3" fill="#e8e8e8"/><rect x="1074" y="198" width="1" height="3" fill="#e8e8e8"/><rect x="1074" y="204" width="1" height="3" fill="#e8e8e8"/><rect x="1074" y="210" width="1" height="3" fill="#e8e8e8"/><rect x="1074" y="216" width="1" height="3" fill="#e8e8e8"/><rect x="1074" y="222" width="1" height="3" fill="#e8e8e8"/><rect x="1074" y="228" width="1" height="3" fill="#e8e8e8"/><rect x="1074" y="234" width="1" height="3" fill="#e8e8e8"/><rect x="1074" y="240" width="1" height="3" fill="#e8e8e8"/><rect x="1074" y="246" width="1" height="3" fill="#e8e8e8"/><rect x="1074" y="252" width="1" height="3" fill="#e8e8e8"/><rect x="1114" y="66" width="1" height="3" fill="#e8e8e8"/><rect x="1114" y="72" width="1" height="3" fill="#e8e8e8"/><rect x="1114" y="78" width="1" height="3" fill="#e8e8e8"/><rect x="1114" y="84" width="1" height="3" fill="#e8e8e8"/><rect x="1114" y="90" width="1" height="3" fill="#e8e8e8"/><rect x="1114" y="96" width="1" height="3" fill="#e8e8e8"/><rect x="1114" y="102" width="1" height="3" fill="#e8e8e8"/><rect x="1114" y="108" width="1" height="3" fill="#e8e8e8"/><rect x="1114" y="114" width="1" height="3" fill="#e8e8e8"/><rect x="1114" y="120" width="1" height="3" fill="#e8e8e8"/><rect x="1114" y="126" width="1" height="3" fill="#e8e8e8"/><rect x="1114" y="132" width="1" height="3" fill="#e8e8e8"/><rect x="1114" y="138" width="1" height="3" fill="#e8e8e8"/><rect x="1114" y="144" width="1" height="3" fill="#e8e8e8"/><rect x="1114" y="150" width="1" height="3" fill="#e8e8e8"/><rect x="1114" y="156" width="1" height="3" fill="#e8e8e8"/><rect x="1114" y="162" width="1" height="3" fill="#e8e8e8"/><rect x="1114" y="168" width="1" height="3" fill="#e8e8e8"/><rect x="1114" y="174" width="1" height="3" fill="#e8e8e8"/><rect x="1114" y="180" width="1" height="3" fill="#e8e8e8"/><rect x="1114" y="186" width="1" height="3" fill="#e8e8e8"/><rect x="1114" y="192" width="1" height="3" fill="#e8e8e8"/><rect x="1114" y="198" width="1" height="3" fill="#e8e8e8"/><rect x="1114" y="204" width="1" height="3" fill="#e8e8e8"/><rect x="1114" y="210" width="1" height="3" fill="#e8e8e8"/><rect x="1114" y="216" width="1" height="3" fill="#e8e8e8"/><rect x="1114" y="222" width="1" height="3" fill="#e8e8e8"/><rect x="1114" y="228" width="1" height="3" fill="#e8e8e8"/><rect x="1114" y="234" width="1" height="3" fill="#e8e8e8"/><rect x="1114" y="240" width="1" height="3" fill="#e8e8e8"/><rect x="1114" y="246" width="1" height="3" fill="#e8e8e8"/><rect x="1114" y="252" width="1" height="3" fill="#e8e8e8"/><rect x="1153" y="66" width="1" height="3" fill="#e8e8e8"/><rect x="1153" y="72" width="1" height="3" fill="#e8e8e8"/><rect x="1153" y="78" width="1" height="3" fill="#e8e8e8"/><rect x="1153" y="84" width="1" height="3" fill="#e8e8e8"/><rect x="1153" y="90" width="1" height="3" fill="#e8e8e8"/><rect x="1153" y="96" width="1" height="3" fill="#e8e8e8"/><rect x="1153" y="102" width="1" height="3" fill="#e8e8e8"/><rect x="1153" y="108" width="1" height="3" fill="#e8e8e8"/><rect x="1153" y="114" width="1" height="3" fill="#e8e8e8"/><rect x="1153" y="120" width="1" height="3" fill="#e8e8e8"/><rect x="1153" y="126" width="1" height="3" fill="#e8e8e8"/><rect x="1153" y="132" width="1" height="3" fill="#e8e8e8"/><rect x="1153" y="138" width="1" height="3" fill="#e8e8e8"/><rect x="1153" y="144" width="1" height="3" fill="#e8e8e8"/><rect x="1153" y="150" width="1" height="3" fill="#e8e8e8"/><rect x="1153" y="156" width="1" height="3" fill="#e8e8e8"/><rect x="1153" y="162" width="1" height="3" fill="#e8e8e8"/><rect x="1153" y="168" width="1" height="3" fill="#e8e8e8"/><rect x="1153" y="174" width="1" height="3" fill="#e8e8e8"/><rect x="1153" y="180" width="1" height="3" fill="#e8e8e8"/><rect x="1153" y="186" width="1" height="3" fill="#e8e8e8"/><rect x="1153" y="192" width="1" height="3" fill="#e8e8e8"/><rect x="1153" y="198" width="1" height="3" fill="#e8e8e8"/><rect x="1153" y="204" width="1" height="3" fill="#e8e8e8"/><rect x="1153" y="210" width="1" height="3" fill="#e8e8e8"/><rect x="1153" y="216" width="1" height="3" fill="#e8e8e8"/><rect x="1153" y="222" width="1" height="3" fill="#e8e8e8"/><rect x="1153" y="228" width="1" height="3" fill="#e8e8e8"/><rect x="1153" y="234" width="1" height="3" fill="#e8e8e8"/><rect x="1153" y="240" width="1" height="3" fill="#e8e8e8"/><rect x="1153" y="246" width="1" height="3" fill="#e8e8e8"/><rect x="1153" y="252" width="1" height="3" fill="#e8e8e8"/><rect x="1192" y="66" width="1" height="3" fill="#e8e8e8"/><rect x="1192" y="72" width="1" height="3" fill="#e8e8e8"/><rect x="1192" y="78" width="1" height="3" fill="#e8e8e8"/><rect x="1192" y="84" width="1" height="3" fill="#e8e8e8"/><rect x="1192" y="90" width="1" height="3" fill="#e8e8e8"/><rect x="1192" y="96" width="1" height="3" fill="#e8e8e8"/><rect x="1192" y="102" width="1" height="3" fill="#e8e8e8"/><rect x="1192" y="108" width="1" height="3" fill="#e8e8e8"/><rect x="1192" y="114" width="1" height="3" fill="#e8e8e8"/><rect x="1192" y="120" width="1" height="3" fill="#e8e8e8"/><rect x="1192" y="126" width="1" height="3" fill="#e8e8e8"/><rect x="1192" y="132" width="1" height="3" fill="#e8e8e8"/><rect x="1192" y="138" width="1" height="3" fill="#e8e8e8"/><rect x="1192" y="144" width="1" height="3" fill="#e8e8e8"/><rect x="1192" y="150" width="1" height="3" fill="#e8e8e8"/><rect x="1192" y="156" width="1" height="3" fill="#e8e8e8"/><rect x="1192" y="162" width="1" height="3" fill="#e8e8e8"/><rect x="1192" y="168" width="1" height="3" fill="#e8e8e8"/><rect x="1192" y="174" width="1" height="3" fill="#e8e8e8"/><rect x="1192" y="180" width="1" height="3" fill="#e8e8e8"/><rect x="1192" y="186" width="1" height="3" fill="#e8e8e8"/><rect x="1192" y="192" width="1" height="3" fill="#e8e8e8"/><rect x="1192" y="198" width="1" height="3" fill="#e8e8e8"/><rect x="1192" y="204" width="1" height="3" fill="#e8e8e8"/><rect x="1192" y="210" width="1" height="3" fill="#e8e8e8"/><rect x="1192" y="216" width="1" height="3" fill="#e8e8e8"/><rect x="1192" y="222" width="1" height="3" fill="#e8e8e8"/><rect x="1192" y="228" width="1" height="3" fill="#e8e8e8"/><rect x="1192" y="234" width="1" height="3" fill="#e8e8e8"/><rect x="1192" y="240" width="1" height="3" fill="#e8e8e8"/><rect x="1192" y="246" width="1" height="3" fill="#e8e8e8"/><rect x="1192" y="252" width="1" height="3" fill="#e8e8e8"/><rect x="839" y="159" width="393" height="1" fill="#ffffff"/><rect x="847" y="158" width="1" height="3" fill="#ffffff"/><rect x="855" y="158" width="1" height="3" fill="#ffffff"/><rect x="863" y="158" width="1" height="3" fill="#ffffff"/><rect x="870" y="158" width="1" height="3" fill="#ffffff"/><rect x="878" y="158" width="1" height="3" fill="#ffffff"/><rect x="886" y="158" width="1" height="3" fill="#ffffff"/><rect x="894" y="158" width="1" height="3" fill="#ffffff"/><rect x="902" y="158" width="1" height="3" fill="#ffffff"/><rect x="910" y="158" width="1" height="3" fill="#ffffff"/><rect x="917" y="158" width="1" height="3" fill="#ffffff"/><rect x="925" y="158" width="1" height="3" fill="#ffffff"/><rect x="933" y="158" width="1" height="3" fill="#ffffff"/><rect x="941" y="158" width="1" height="3" fill="#ffffff"/><rect x="949" y="158" width="1" height="3" fill="#ffffff"/><rect x="957" y="158" width="1" height="3" fill="#ffffff"/><rect x="964" y="158" width="1" height="3" fill="#ffffff"/><rect x="972" y="158" width="1" height="3" fill="#ffffff"/><rect x="980" y="158" width="1" height="3" fill="#ffffff"/><rect x="988" y="158" width="1" height="3" fill="#ffffff"/><rect x="996" y="158" width="1" height="3" fill="#ffffff"/><rect x="1004" y="158" width="1" height="3" fill="#ffffff"/><rect x="1011" y="158" width="1" height="3" fill="#ffffff"/><rect x="1019" y="158" width="1" height="3" fill="#ffffff"/><rect x="1027" y="158" width="1" height="3" fill="#ffffff"/><rect x="1035" y="158" width="1" height="3" fill="#ffffff"/><rect x="1043" y="158" width="1" height="3" fill="#ffffff"/><rect x="1051" y="158" width="1" height="3" fill="#ffffff"/><rect x="1059" y="158" width="1" height="3" fill="#ffffff"/><rect x="1066" y="158" width="1" height="3" fill="#ffffff"/><rect x="1074" y="158" width="1" height="3" fill="#ffffff"/><rect x="1082" y="158" width="1" height="3" fill="#ffffff"/><rect x="1090" y="158" width="1" height="3" fill="#ffffff"/><rect x="1098" y="158" width="1" height="3" fill="#ffffff"/><rect x="1106" y="158" width="1" height="3" fill="#ffffff"/><rect x="1113" y="158" width="1" height="3" fill="#ffffff"/><rect x="1121" y="158" width="1" height="3" fill="#ffffff"/><rect x="1129" y="158" width="1" height="3" fill="#ffffff"/><rect x="1137" y="158" width="1" height="3" fill="#ffffff"/><rect x="1145" y="158" width="1" height="3" fill="#ffffff"/><rect x="1153" y="158" width="1" height="3" fill="#ffffff"/><rect x="1160" y="158" width="1" height="3" fill="#ffffff"/><rect x="1168" y="158" width="1" height="3" fill="#ffffff"/><rect x="1176" y="158" width="1" height="3" fill="#ffffff"/><rect x="1184" y="158" width="1" height="3" fill="#ffffff"/><rect x="1192" y="158" width="1" height="3" fill="#ffffff"/><rect x="1200" y="158" width="1" height="3" fill="#ffffff"/><rect x="1207" y="158" width="1" height="3" fill="#ffffff"/><rect x="1215" y="158" width="1" height="3" fill="#ffffff"/><rect x="1223" y="158" width="1" height="3" fill="#ffffff"/><rect x="839" y="64" width="1" height="191" fill="#00ff00"/><rect x="839" y="148" width="1" height="4" fill="#2080ff"/><polygon points="833,58 846,58 839.5,64" fill="#ff00ff"/></svg><svg class="abs" style="left:0;top:0" width="1262" height="558" shape-rendering="crispEdges"><polyline points="840.0,152.8 841.0,149.9 842.0,147.0 843.0,144.1 844.0,141.4 845.0,138.8 846.0,136.3 847.0,134.0 848.0,131.8 849.0,129.8 850.0,128.0 851.0,126.4 852.0,125.0 853.0,123.8 854.0,122.9 855.0,122.2 856.0,121.7 857.0,121.5 858.0,121.5 859.0,121.8 860.0,122.3 861.0,123.1 862.0,124.0 863.0,125.3 864.0,126.7 865.0,128.3 866.0,130.2 867.0,132.2 868.0,134.4 869.0,136.7 870.0,139.3 871.0,141.9 872.0,144.6 873.0,147.5 874.0,150.4 875.0,153.4 876.0,156.4 877.0,159.5 878.0,162.5 879.0,165.5 880.0,168.5 881.0,171.4 882.0,174.3 883.0,177.0 884.0,179.7 885.0,182.2 886.0,184.6 887.0,186.8 888.0,188.8 889.0,190.6 890.0,192.3 891.0,193.7 892.0,194.9 893.0,195.9 894.0,196.7 895.0,197.2 896.0,197.5 897.0,197.5 898.0,197.3 899.0,196.8 900.0,196.1 901.0,195.2 902.0,194.0 903.0,192.6 904.0,191.1 905.0,189.3 906.0,187.3 907.0,185.1 908.0,182.8 909.0,180.3 910.0,177.7 911.0,175.0 912.0,172.1 913.0,169.2 914.0,166.3 915.0,163.2 916.0,160.2 917.0,157.2 918.0,154.1 919.0,151.1 920.0,148.2 921.0,145.3 922.0,142.6 923.0,139.9 924.0,137.3 925.0,134.9 926.0,132.7 927.0,130.6 928.0,128.7 929.0,127.1 930.0,125.6 931.0,124.3 932.0,123.3 933.0,122.5 934.0,121.9 935.0,121.6 936.0,121.5 937.0,121.7 938.0,122.1 939.0,122.7 940.0,123.6 941.0,124.7 942.0,126.0 943.0,127.6 944.0,129.3 945.0,131.3 946.0,133.4 947.0,135.7 948.0,138.2 949.0,140.7 950.0,143.4 951.0,146.3 952.0,149.1 953.0,152.1 954.0,155.1 955.0,158.1 956.0,161.2 957.0,164.2 958.0,167.2 959.0,170.2 960.0,173.1 961.0,175.9 962.0,178.6 963.0,181.1 964.0,183.6 965.0,185.8 966.0,187.9 967.0,189.9 968.0,191.6 969.0,193.1 970.0,194.4 971.0,195.5 972.0,196.4 973.0,197.0 974.0,197.4 975.0,197.5 976.0,197.4 977.0,197.0 978.0,196.4 979.0,195.6 980.0,194.6 981.0,193.3 982.0,191.8 983.0,190.1 984.0,188.1 985.0,186.1 986.0,183.8 987.0,181.4 988.0,178.8 989.0,176.1 990.0,173.4 991.0,170.5 992.0,167.5 993.0,164.5 994.0,161.5 995.0,158.5 996.0,155.4 997.0,152.4 998.0,149.5 999.0,146.6 1000.0,143.7 1001.0,141.0 1002.0,138.4 1003.0,136.0 1004.0,133.6 1005.0,131.5 1006.0,129.5 1007.0,127.8 1008.0,126.2 1009.0,124.8 1010.0,123.7 1011.0,122.8 1012.0,122.1 1013.0,121.7 1014.0,121.5 1015.0,121.6 1016.0,121.9 1017.0,122.4 1018.0,123.2 1019.0,124.2 1020.0,125.4 1021.0,126.9 1022.0,128.6 1023.0,130.4 1024.0,132.5 1025.0,134.7 1026.0,137.1 1027.0,139.6 1028.0,142.3 1029.0,145.0 1030.0,147.9 1031.0,150.8 1032.0,153.8 1033.0,156.8 1034.0,159.9 1035.0,162.9 1036.0,165.9 1037.0,168.9 1038.0,171.8 1039.0,174.7 1040.0,177.4 1041.0,180.0 1042.0,182.5 1043.0,184.9 1044.0,187.1 1045.0,189.1 1046.0,190.9 1047.0,192.5 1048.0,193.9 1049.0,195.1 1050.0,196.0 1051.0,196.8 1052.0,197.2 1053.0,197.5 1054.0,197.5 1055.0,197.2 1056.0,196.7 1057.0,196.0 1058.0,195.0 1059.0,193.8 1060.0,192.4 1061.0,190.8 1062.0,189.0 1063.0,187.0 1064.0,184.8 1065.0,182.4 1066.0,179.9 1067.0,177.3 1068.0,174.6 1069.0,171.7 1070.0,168.8 1071.0,165.8 1072.0,162.8 1073.0,159.8 1074.0,156.7 1075.0,153.7 1076.0,150.7 1077.0,147.8 1078.0,144.9 1079.0,142.2 1080.0,139.5 1081.0,137.0 1082.0,134.6 1083.0,132.4 1084.0,130.4 1085.0,128.5 1086.0,126.8 1087.0,125.4 1088.0,124.2 1089.0,123.2 1090.0,122.4 1091.0,121.9 1092.0,121.6 1093.0,121.5 1094.0,121.7 1095.0,122.1 1096.0,122.8 1097.0,123.7 1098.0,124.9 1099.0,126.2 1100.0,127.8 1101.0,129.6 1102.0,131.6 1103.0,133.7 1104.0,136.0 1105.0,138.5 1106.0,141.1 1107.0,143.8 1108.0,146.7 1109.0,149.6 1110.0,152.5 1111.0,155.5 1112.0,158.6 1113.0,161.6 1114.0,164.6 1115.0,167.6 1116.0,170.6 1117.0,173.5 1118.0,176.2 1119.0,178.9 1120.0,181.5 1121.0,183.9 1122.0,186.1 1123.0,188.2 1124.0,190.1 1125.0,191.8 1126.0,193.3 1127.0,194.6 1128.0,195.6 1129.0,196.5 1130.0,197.1 1131.0,197.4 1132.0,197.5 1133.0,197.4 1134.0,197.0 1135.0,196.3 1136.0,195.5 1137.0,194.4 1138.0,193.1 1139.0,191.5 1140.0,189.8 1141.0,187.9 1142.0,185.8 1143.0,183.5 1144.0,181.0 1145.0,178.5 1146.0,175.8 1147.0,173.0 1148.0,170.1 1149.0,167.1 1150.0,164.1 1151.0,161.1 1152.0,158.0 1153.0,155.0 1154.0,152.0 1155.0,149.0 1156.0,146.2 1157.0,143.3 1158.0,140.6 1159.0,138.1 1160.0,135.6 1161.0,133.3 1162.0,131.2 1163.0,129.3" fill="none" stroke="#ff8a10" stroke-width="1"/></svg><div class="abs" style="left:820px;top:270px;width:430px;height:14px;background:#f0f0f0;border-top:1px solid #8c8c8c"></div><div class="abs" style="left:838px;top:271px;width:267px;height:12px;background-color:#fff;background-image:linear-gradient(45deg,#e8e8e8 25%,transparent 25%,transparent 75%,#e8e8e8 75%),linear-gradient(45deg,#e8e8e8 25%,transparent 25%,transparent 75%,#e8e8e8 75%);background-size:2px 2px;background-position:0 0,1px 1px"></div><div class="abs" style="left:821px;top:271px;width:17px;height:12px;background:#f0f0f0;border-top:1px solid #fff;border-left:1px solid #fff;border-right:2px solid #696969;border-bottom:2px solid #696969;box-shadow:inset -1px -1px 0 #a0a0a0"></div><div class="abs" style="left:827px;top:274px;width:0;height:0;border-top:3px solid transparent;border-bottom:3px solid transparent;border-right:3px solid #000"></div><div class="abs" style="left:1105px;top:271px;width:127px;height:12px;background:#f0f0f0;border-top:1px solid #fff;border-left:1px solid #fff;border-right:2px solid #696969;border-bottom:2px solid #696969;box-shadow:inset -1px -1px 0 #a0a0a0"></div><div class="abs" style="left:1232px;top:271px;width:17px;height:12px;background:#f0f0f0;border-top:1px solid #fff;border-left:1px solid #fff;border-right:2px solid #696969;border-bottom:2px solid #696969;box-shadow:inset -1px -1px 0 #a0a0a0"></div><div class="abs" style="left:1239px;top:274px;width:0;height:0;border-top:3px solid transparent;border-bottom:3px solid transparent;border-left:3px solid #000"></div><div class="abs" style="left:820px;top:284px;width:430px;height:1px;background:#a0a0a0"></div><div class="abs" style="left:821px;top:285px;width:52px;height:51px;background:#f0f0f0;border-right:2px solid #696969;border-bottom:1px solid #fff;border-left:1px solid #fff"></div><div class="abs" style="left:873px;top:285px;width:267px;height:51px;background:#fff;border-top:2px solid #a0a0a0;border-left:1px solid #a0a0a0;border-right:1px solid #e0e0e0;border-bottom:1px solid #e0e0e0"></div><div class="abs t" style="left:829px;top:295.66px;font-size:9px;line-height:9px;color:#000;">T1</div><div class="abs t" style="left:829px;top:308.66px;font-size:9px;line-height:9px;color:#000;">T2</div><div class="abs t" style="left:829px;top:322.66px;font-size:9px;line-height:9px;color:#000;">T2-T1</div><div class="abs" style="left:844px;top:292px;width:13px;height:14px;background-color:#c8c8c8;background-image:linear-gradient(45deg,#dcdcdc 25%,transparent 25%,transparent 75%,#dcdcdc 75%),linear-gradient(45deg,#dcdcdc 25%,transparent 25%,transparent 75%,#dcdcdc 75%);background-size:2px 2px;background-position:0 0,1px 1px;border-top:1px solid #fff;border-left:1px solid #fff;border-right:2px solid #696969;border-bottom:2px solid #696969"></div><div class="abs" style="left:857px;top:292px;width:12px;height:14px;background-color:#c8c8c8;background-image:linear-gradient(45deg,#dcdcdc 25%,transparent 25%,transparent 75%,#dcdcdc 75%),linear-gradient(45deg,#dcdcdc 25%,transparent 25%,transparent 75%,#dcdcdc 75%);background-size:2px 2px;background-position:0 0,1px 1px;border-top:1px solid #fff;border-left:1px solid #fff;border-right:2px solid #696969;border-bottom:2px solid #696969"></div><svg class="abs" style="left:840px;top:288px" width="32" height="20"><polygon points="5.8,10.3 10.6,6.1 10.6,8.9 15.2,8.9 15.2,12.1 10.6,12.1 10.6,14.7" fill="#ff0000"/><polygon points="27.1,10.3 22.3,6.1 22.3,8.9 18,8.9 18,12.1 22.3,12.1 22.3,14.7" fill="#ff0000"/></svg><div class="abs" style="left:844px;top:307px;width:13px;height:14px;background-color:#c8c8c8;background-image:linear-gradient(45deg,#dcdcdc 25%,transparent 25%,transparent 75%,#dcdcdc 75%),linear-gradient(45deg,#dcdcdc 25%,transparent 25%,transparent 75%,#dcdcdc 75%);background-size:2px 2px;background-position:0 0,1px 1px;border-top:1px solid #fff;border-left:1px solid #fff;border-right:2px solid #696969;border-bottom:2px solid #696969"></div><div class="abs" style="left:857px;top:307px;width:12px;height:14px;background-color:#c8c8c8;background-image:linear-gradient(45deg,#dcdcdc 25%,transparent 25%,transparent 75%,#dcdcdc 75%),linear-gradient(45deg,#dcdcdc 25%,transparent 25%,transparent 75%,#dcdcdc 75%);background-size:2px 2px;background-position:0 0,1px 1px;border-top:1px solid #fff;border-left:1px solid #fff;border-right:2px solid #696969;border-bottom:2px solid #696969"></div><svg class="abs" style="left:840px;top:303px" width="32" height="20"><polygon points="5.8,10.3 10.6,6.1 10.6,8.9 15.2,8.9 15.2,12.1 10.6,12.1 10.6,14.7" fill="#ff0000"/><polygon points="27.1,10.3 22.3,6.1 22.3,8.9 18,8.9 18,12.1 22.3,12.1 22.3,14.7" fill="#ff0000"/></svg><div class="abs t" style="left:807px;top:287.66px;width:200px;text-align:center;font-size:9px;line-height:9px;color:#000;">Time</div><div class="abs t" style="left:946px;top:287.66px;font-size:9px;line-height:9px;color:#000;">Channel_A</div><div class="abs t" style="left:1029px;top:287.66px;font-size:9px;line-height:9px;color:#000;">Channel_B</div><div class="abs" style="left:1159px;top:292px;width:53px;height:15px;background:#f0f0f0;border-top:1px solid #fff;border-left:1px solid #fff;border-right:2px solid #696969;border-bottom:2px solid #696969;box-shadow:inset -1px -1px 0 #a0a0a0"></div><div class="abs t" style="left:1085.5px;top:295.16px;width:200px;text-align:center;font-size:9px;line-height:9px;color:#000;">Reverse</div><div class="abs" style="left:1159px;top:307px;width:53px;height:15px;background:#f0f0f0;border-top:1px solid #fff;border-left:1px solid #fff;border-right:2px solid #696969;border-bottom:2px solid #696969;box-shadow:inset -1px -1px 0 #a0a0a0"></div><div class="abs t" style="left:1085.5px;top:310.16px;width:200px;text-align:center;font-size:9px;line-height:9px;color:#000;">Save</div><div class="abs t" style="left:925px;top:327.66px;width:300px;text-align:right;font-size:9px;line-height:9px;color:#000;">GND</div><div class="abs" style="left:1229px;top:327px;width:10px;height:10px;border-radius:50%;border:1px solid;border-color:#a0a0a0 #fff #fff #a0a0a0;box-shadow:inset 1px 1px 0 #696969"></div><div class="abs" style="left:820px;top:336px;width:430px;height:71px;background:#f0f0f0;border-right:1px solid #a0a0a0;border-bottom:1px solid #a0a0a0"></div><div class="abs" style="left:822px;top:344px;width:101px;height:59px;border:1px solid #a0a0a0;box-shadow:1px 1px 0 #fff, inset 1px 1px 0 #fff"></div><div class="abs t" style="left:828px;top:339.06px;font-size:9px;line-height:9px;color:#000;background:#f0f0f0;padding:0 2px">Timebase</div><div class="abs" style="left:925px;top:344px;width:97px;height:59px;border:1px solid #a0a0a0;box-shadow:1px 1px 0 #fff, inset 1px 1px 0 #fff"></div><div class="abs t" style="left:931px;top:339.06px;font-size:9px;line-height:9px;color:#000;background:#f0f0f0;padding:0 2px">Channel A</div><div class="abs" style="left:1023px;top:344px;width:100px;height:59px;border:1px solid #a0a0a0;box-shadow:1px 1px 0 #fff, inset 1px 1px 0 #fff"></div><div class="abs t" style="left:1029px;top:339.06px;font-size:9px;line-height:9px;color:#000;background:#f0f0f0;padding:0 2px">Channel B</div><div class="abs" style="left:1125px;top:344px;width:122px;height:59px;border:1px solid #a0a0a0;box-shadow:1px 1px 0 #fff, inset 1px 1px 0 #fff"></div><div class="abs t" style="left:1131px;top:339.06px;font-size:9px;line-height:9px;color:#000;background:#f0f0f0;padding:0 2px">Trigger</div><div class="abs t" style="left:826px;top:354.66px;font-size:9px;line-height:9px;color:#000;">Scale</div><div class="abs" style="left:851px;top:350px;width:70px;height:17px;background:#fff;border-top:2px solid #696969;border-left:2px solid #696969;border-right:1px solid #e3e3e3;border-bottom:1px solid #e3e3e3;box-shadow:inset 1px 1px 0 #a0a0a0"></div><div class="abs t" style="left:856px;top:354.66px;font-size:9px;line-height:9px;color:#000;">500 µs/Div</div><div class="abs t" style="left:826px;top:372.66px;font-size:9px;line-height:9px;color:#000;">X position</div><div class="abs" style="left:871px;top:368px;width:50px;height:16px;background:#fff;border-top:2px solid #696969;border-left:2px solid #696969;border-right:1px solid #e3e3e3;border-bottom:1px solid #e3e3e3;box-shadow:inset 1px 1px 0 #a0a0a0"></div><div class="abs t" style="left:876px;top:372.66px;font-size:9px;line-height:9px;color:#000;">0</div><div class="abs" style="left:825px;top:388px;width:23px;height:15px;background-color:#f7f7f7;background-image:linear-gradient(45deg,#e6e6e6 25%,transparent 25%,transparent 75%,#e6e6e6 75%),linear-gradient(45deg,#e6e6e6 25%,transparent 25%,transparent 75%,#e6e6e6 75%);background-size:2px 2px;background-position:0 0,1px 1px;border-top:2px solid #696969;border-left:2px solid #696969;border-right:1px solid #fff;border-bottom:1px solid #fff"></div><div class="abs t" style="left:737.0px;top:391.66px;width:200px;text-align:center;font-size:9px;line-height:9px;color:#000;">Y/T</div><div class="abs" style="left:850px;top:388px;width:22px;height:15px;background:#f0f0f0;border-top:1px solid #fff;border-left:1px solid #fff;border-right:2px solid #696969;border-bottom:2px solid #696969;box-shadow:inset -1px -1px 0 #a0a0a0"></div><div class="abs t" style="left:761.0px;top:391.16px;width:200px;text-align:center;font-size:9px;line-height:9px;color:#000;">Add</div><div class="abs" style="left:873px;top:388px;width:22px;height:15px;background:#f0f0f0;border-top:1px solid #fff;border-left:1px solid #fff;border-right:2px solid #696969;border-bottom:2px solid #696969;box-shadow:inset -1px -1px 0 #a0a0a0"></div><div class="abs t" style="left:784.0px;top:391.16px;width:200px;text-align:center;font-size:9px;line-height:9px;color:#000;">B/A</div><div class="abs" style="left:897px;top:388px;width:23px;height:15px;background:#f0f0f0;border-top:1px solid #fff;border-left:1px solid #fff;border-right:2px solid #696969;border-bottom:2px solid #696969;box-shadow:inset -1px -1px 0 #a0a0a0"></div><div class="abs t" style="left:808.5px;top:391.16px;width:200px;text-align:center;font-size:9px;line-height:9px;color:#000;">A/B</div><div class="abs t" style="left:929px;top:355.66px;font-size:9px;line-height:9px;color:#000;">Scale</div><div class="abs" style="left:954px;top:350px;width:67px;height:17px;background:#fff;border-top:2px solid #696969;border-left:2px solid #696969;border-right:1px solid #e3e3e3;border-bottom:1px solid #e3e3e3;box-shadow:inset 1px 1px 0 #a0a0a0"></div><div class="abs t" style="left:959px;top:354.66px;font-size:9px;line-height:9px;color:#000;">20&nbsp; V/Div</div><div class="abs t" style="left:929px;top:372.66px;font-size:9px;line-height:9px;color:#000;">Y position</div><div class="abs" style="left:971px;top:368px;width:50px;height:16px;background:#fff;border-top:2px solid #696969;border-left:2px solid #696969;border-right:1px solid #e3e3e3;border-bottom:1px solid #e3e3e3;box-shadow:inset 1px 1px 0 #a0a0a0"></div><div class="abs t" style="left:976px;top:372.66px;font-size:9px;line-height:9px;color:#000;">0</div><div class="abs" style="left:929px;top:388px;width:20px;height:15px;background:#f0f0f0;border-top:1px solid #fff;border-left:1px solid #fff;border-right:2px solid #696969;border-bottom:2px solid #696969;box-shadow:inset -1px -1px 0 #a0a0a0"></div><div class="abs t" style="left:839.0px;top:391.16px;width:200px;text-align:center;font-size:9px;line-height:9px;color:#000;">AC</div><div class="abs" style="left:954px;top:388px;width:20px;height:15px;background:#f0f0f0;border-top:1px solid #fff;border-left:1px solid #fff;border-right:2px solid #696969;border-bottom:2px solid #696969;box-shadow:inset -1px -1px 0 #a0a0a0"></div><div class="abs t" style="left:864.0px;top:391.16px;width:200px;text-align:center;font-size:9px;line-height:9px;color:#000;">0</div><div class="abs" style="left:979px;top:388px;width:19px;height:15px;background-color:#f7f7f7;background-image:linear-gradient(45deg,#e6e6e6 25%,transparent 25%,transparent 75%,#e6e6e6 75%),linear-gradient(45deg,#e6e6e6 25%,transparent 25%,transparent 75%,#e6e6e6 75%);background-size:2px 2px;background-position:0 0,1px 1px;border-top:2px solid #696969;border-left:2px solid #696969;border-right:1px solid #fff;border-bottom:1px solid #fff"></div><div class="abs t" style="left:889.0px;top:391.66px;width:200px;text-align:center;font-size:9px;line-height:9px;color:#000;">DC</div><div class="abs" style="left:1008px;top:389px;width:10px;height:10px;border-radius:50%;border:1px solid;border-color:#a0a0a0 #fff #fff #a0a0a0;box-shadow:inset 1px 1px 0 #696969"></div><div class="abs" style="left:1011px;top:392px;width:4px;height:4px;border-radius:50%;background:#909090"></div><div class="abs t" style="left:1026px;top:355.66px;font-size:9px;line-height:9px;color:#000;">Scale</div><div class="abs" style="left:1055px;top:350px;width:66px;height:17px;background:#fff;border-top:2px solid #696969;border-left:2px solid #696969;border-right:1px solid #e3e3e3;border-bottom:1px solid #e3e3e3;box-shadow:inset 1px 1px 0 #a0a0a0"></div><div class="abs t" style="left:1060px;top:354.66px;font-size:9px;line-height:9px;color:#000;">5&nbsp; V/Div</div><div class="abs t" style="left:1026px;top:373.66px;font-size:9px;line-height:9px;color:#000;">Y position</div><div class="abs" style="left:1073px;top:368px;width:48px;height:16px;background:#fff;border-top:2px solid #696969;border-left:2px solid #696969;border-right:1px solid #e3e3e3;border-bottom:1px solid #e3e3e3;box-shadow:inset 1px 1px 0 #a0a0a0"></div><div class="abs t" style="left:1078px;top:372.66px;font-size:9px;line-height:9px;color:#000;">0</div><div class="abs" style="left:1027px;top:388px;width:19px;height:15px;background:#f0f0f0;border-top:1px solid #fff;border-left:1px solid #fff;border-right:2px solid #696969;border-bottom:2px solid #696969;box-shadow:inset -1px -1px 0 #a0a0a0"></div><div class="abs t" style="left:936.5px;top:391.16px;width:200px;text-align:center;font-size:9px;line-height:9px;color:#000;">AC</div><div class="abs" style="left:1048px;top:388px;width:17px;height:15px;background:#f0f0f0;border-top:1px solid #fff;border-left:1px solid #fff;border-right:2px solid #696969;border-bottom:2px solid #696969;box-shadow:inset -1px -1px 0 #a0a0a0"></div><div class="abs t" style="left:956.5px;top:391.16px;width:200px;text-align:center;font-size:9px;line-height:9px;color:#000;">0</div><div class="abs" style="left:1066px;top:388px;width:20px;height:15px;background-color:#f7f7f7;background-image:linear-gradient(45deg,#e6e6e6 25%,transparent 25%,transparent 75%,#e6e6e6 75%),linear-gradient(45deg,#e6e6e6 25%,transparent 25%,transparent 75%,#e6e6e6 75%);background-size:2px 2px;background-position:0 0,1px 1px;border-top:2px solid #696969;border-left:2px solid #696969;border-right:1px solid #fff;border-bottom:1px solid #fff"></div><div class="abs t" style="left:976.5px;top:391.66px;width:200px;text-align:center;font-size:9px;line-height:9px;color:#000;">DC</div><div class="abs" style="left:1088px;top:388px;width:14px;height:15px;background:#f0f0f0;border-top:1px solid #fff;border-left:1px solid #fff;border-right:2px solid #696969;border-bottom:2px solid #696969;box-shadow:inset -1px -1px 0 #a0a0a0"></div><div class="abs t" style="left:995.0px;top:391.16px;width:200px;text-align:center;font-size:9px;line-height:9px;color:#000;">-</div><div class="abs" style="left:1108px;top:389px;width:10px;height:10px;border-radius:50%;border:1px solid;border-color:#a0a0a0 #fff #fff #a0a0a0;box-shadow:inset 1px 1px 0 #696969"></div><div class="abs t" style="left:1129px;top:353.66px;font-size:9px;line-height:9px;color:#000;">Edge</div><div class="abs" style="left:1162px;top:349px;width:20px;height:14px;background:#c0c0c0;border-top:2px solid #696969;border-left:2px solid #696969;border-right:1px solid #fff;border-bottom:1px solid #fff"></div><div class="abs" style="left:1186px;top:349px;width:20px;height:14px;background:#f0f0f0;border-top:1px solid #fff;border-left:1px solid #fff;border-right:2px solid #696969;border-bottom:2px solid #696969;box-shadow:inset -1px -1px 0 #a0a0a0"></div><svg class="abs" style="left:1162px;top:349px" width="44" height="14" shape-rendering="crispEdges"><polyline points="6,10.5 10.5,10.5 10.5,3.5 15,3.5" fill="none" stroke="#000"/><polyline points="8,7 10.5,4.5 13,7" fill="none" stroke="#000"/><polyline points="29,3.5 33.5,3.5 33.5,10.5 38,10.5" fill="none" stroke="#000"/><polyline points="31,7 33.5,9.5 36,7" fill="none" stroke="#000"/></svg><div class="abs" style="left:1228px;top:350px;width:10px;height:10px;border-radius:50%;border:1px solid;border-color:#a0a0a0 #fff #fff #a0a0a0;box-shadow:inset 1px 1px 0 #696969"></div><div class="abs t" style="left:1129px;top:371.66px;font-size:9px;line-height:9px;color:#000;">Level</div><div class="abs" style="left:1161px;top:367px;width:52px;height:17px;background:#fff;border-top:2px solid #696969;border-left:2px solid #696969;border-right:1px solid #e3e3e3;border-bottom:1px solid #e3e3e3;box-shadow:inset 1px 1px 0 #a0a0a0"></div><div class="abs t" style="left:1166px;top:371.66px;font-size:9px;line-height:9px;color:#000;">0</div><div class="abs" style="left:1213px;top:367px;width:31px;height:17px;background:#fff;border-top:2px solid #696969;border-left:2px solid #696969;border-right:1px solid #e3e3e3;border-bottom:1px solid #e3e3e3;box-shadow:inset 1px 1px 0 #a0a0a0"></div><div class="abs t" style="left:1128.5px;top:370.66px;width:200px;text-align:center;font-size:9px;line-height:9px;color:#000;">V</div><div class="abs" style="left:1126px;top:388px;width:21px;height:14px;background:#f0f0f0;border-top:1px solid #fff;border-left:1px solid #fff;border-right:2px solid #696969;border-bottom:2px solid #696969;box-shadow:inset -1px -1px 0 #a0a0a0"></div><div class="abs t" style="left:1036.5px;top:390.66px;width:200px;text-align:center;font-size:9px;line-height:9px;color:#000;">Sing.</div><div class="abs" style="left:1148px;top:388px;width:21px;height:14px;background:#f0f0f0;border-top:1px solid #fff;border-left:1px solid #fff;border-right:2px solid #696969;border-bottom:2px solid #696969;box-shadow:inset -1px -1px 0 #a0a0a0"></div><div class="abs t" style="left:1058.5px;top:390.66px;width:200px;text-align:center;font-size:9px;line-height:9px;color:#000;">Nor.</div><div class="abs" style="left:1170px;top:388px;width:22px;height:14px;background-color:#f7f7f7;background-image:linear-gradient(45deg,#e6e6e6 25%,transparent 25%,transparent 75%,#e6e6e6 75%),linear-gradient(45deg,#e6e6e6 25%,transparent 25%,transparent 75%,#e6e6e6 75%);background-size:2px 2px;background-position:0 0,1px 1px;border-top:2px solid #696969;border-left:2px solid #696969;border-right:1px solid #fff;border-bottom:1px solid #fff"></div><div class="abs t" style="left:1081.5px;top:391.16px;width:200px;text-align:center;font-size:9px;line-height:9px;color:#000;">Auto</div><div class="abs" style="left:1200px;top:388px;width:14px;height:14px;background-color:#f7f7f7;background-image:linear-gradient(45deg,#e6e6e6 25%,transparent 25%,transparent 75%,#e6e6e6 75%),linear-gradient(45deg,#e6e6e6 25%,transparent 25%,transparent 75%,#e6e6e6 75%);background-size:2px 2px;background-position:0 0,1px 1px;border-top:2px solid #696969;border-left:2px solid #696969;border-right:1px solid #fff;border-bottom:1px solid #fff"></div><div class="abs t" style="left:1107.5px;top:391.16px;width:200px;text-align:center;font-size:9px;line-height:9px;color:#a0a0a0;">A</div><div class="abs" style="left:1214px;top:388px;width:16px;height:14px;background:#f0f0f0;border-top:1px solid #fff;border-left:1px solid #fff;border-right:2px solid #696969;border-bottom:2px solid #696969;box-shadow:inset -1px -1px 0 #a0a0a0"></div><div class="abs t" style="left:1122.0px;top:390.66px;width:200px;text-align:center;font-size:9px;line-height:9px;color:#a0a0a0;">B</div><div class="abs" style="left:1230px;top:388px;width:16px;height:14px;background:#f0f0f0;border-top:1px solid #fff;border-left:1px solid #fff;border-right:2px solid #696969;border-bottom:2px solid #696969;box-shadow:inset -1px -1px 0 #a0a0a0"></div><div class="abs t" style="left:1138.0px;top:390.66px;width:200px;text-align:center;font-size:9px;line-height:9px;color:#a0a0a0;">Ext</div></body></html>
